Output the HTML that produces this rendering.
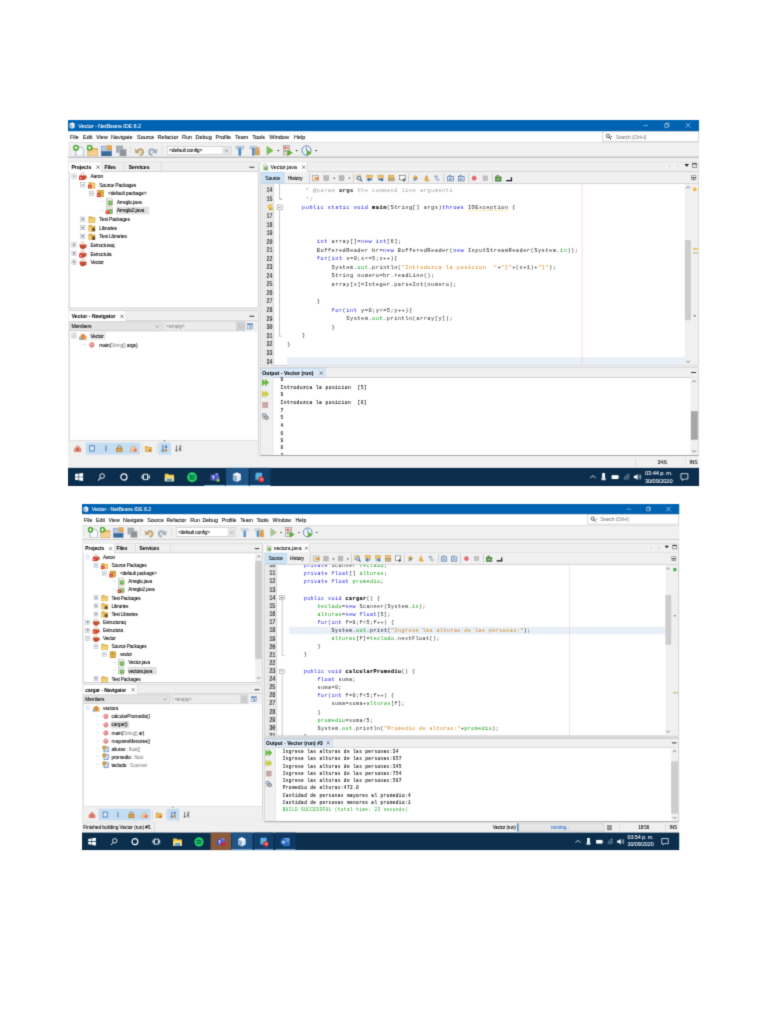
<!DOCTYPE html>
<html><head><meta charset="utf-8"><title>NetBeans screenshots</title>
<style>
html,body{margin:0;padding:0;background:#fff;}
body{width:768px;height:1024px;position:relative;overflow:hidden;font-family:"Liberation Sans",sans-serif;}
.wrap{position:absolute;overflow:hidden;background:#fff;filter:url(#soft);}
.shot{position:absolute;transform-origin:0 0;overflow:hidden;background:#f0f0f0;}
.shot div,.shot span,.shot svg{position:absolute;}
.shot span{white-space:pre;}
.s{font-family:"Liberation Sans",sans-serif;letter-spacing:-0.4px;-webkit-text-stroke:0.12px;}
.m{font-family:"Liberation Mono",monospace;}
.m i,.s i{font-style:normal;}
.m b{font-weight:bold;color:#000;-webkit-text-stroke:0.3px #000;}
</style></head>
<body>
<svg width="0" height="0" style="position:absolute"><defs><filter id="soft" x="0" y="0" width="1" height="1" color-interpolation-filters="sRGB"><feConvolveMatrix order="3" kernelMatrix="0.037 0.192 0.037 0.192 1 0.192 0.037 0.192 0.037" divisor="1.916" edgeMode="duplicate" preserveAlpha="true"/></filter></defs></svg>
<div class="wrap" style="left:66px;top:117px;width:636px;height:371px">
<div class="shot" style="left:2.30px;top:2.80px;width:1366px;height:768px;transform:scale(0.46208,0.47656)">
<div style="left:0.0px;top:0.0px;width:1366.0px;height:23.5px;background:#0063b1;"></div>
<svg style="left:1.3px;top:3.8px" width="16" height="16" viewBox="0 0 16 16"><path d="M8 1.5l5.5 2.5v7.5l-5.5 3l-5.5-3v-7.5z" fill="#dfe9f5"/><path d="M8 1.5l5.5 2.5l-5.5 2.7l-5.5-2.7z" fill="#f4f8fc"/><path d="M8 6.7v7.8l-5.5-3v-7.5z" fill="#9fb9d6"/></svg>
<span class="s" style="top:4.0px;font-size:12px;line-height:16px;color:#fff;left:22.3px;letter-spacing:-0.2px;">Vector - NetBeans IDE 8.2</span>
<svg style="left:1242.2px;top:3.3px" width="16" height="16" viewBox="0 0 16 16"><path d="M3 8.5h10" stroke="#fff" stroke-width="1" fill="none"/></svg>
<svg style="left:1287.7px;top:2.9px" width="16" height="16" viewBox="0 0 16 16"><path d="M3.5 5.5h7v7h-7zM5.5 5.5v-2h7v7h-2" stroke="#fff" stroke-width="1" fill="none"/></svg>
<svg style="left:1334.2px;top:3.3px" width="16" height="16" viewBox="0 0 16 16"><path d="M3 3l10 10M13 3l-10 10" stroke="#fff" stroke-width="1.1" fill="none"/></svg>
<div style="left:0.0px;top:23.5px;width:1366.0px;height:23.7px;background:#fff;"></div>
<span class="s" style="top:27.3px;font-size:12px;line-height:16px;color:#000;left:4.1px;letter-spacing:-0.05px;">File</span>
<span class="s" style="top:27.3px;font-size:12px;line-height:16px;color:#000;left:32.5px;letter-spacing:-0.05px;">Edit</span>
<span class="s" style="top:27.3px;font-size:12px;line-height:16px;color:#000;left:60.4px;letter-spacing:-0.05px;">View</span>
<span class="s" style="top:27.3px;font-size:12px;line-height:16px;color:#000;left:92.8px;letter-spacing:-0.05px;">Navigate</span>
<span class="s" style="top:27.3px;font-size:12px;line-height:16px;color:#000;left:149.3px;letter-spacing:-0.05px;">Source</span>
<span class="s" style="top:27.3px;font-size:12px;line-height:16px;color:#000;left:193.7px;letter-spacing:-0.05px;">Refactor</span>
<span class="s" style="top:27.3px;font-size:12px;line-height:16px;color:#000;left:246.7px;letter-spacing:-0.05px;">Run</span>
<span class="s" style="top:27.3px;font-size:12px;line-height:16px;color:#000;left:275.9px;letter-spacing:-0.05px;">Debug</span>
<span class="s" style="top:27.3px;font-size:12px;line-height:16px;color:#000;left:319.2px;letter-spacing:-0.05px;">Profile</span>
<span class="s" style="top:27.3px;font-size:12px;line-height:16px;color:#000;left:361.4px;letter-spacing:-0.05px;">Team</span>
<span class="s" style="top:27.3px;font-size:12px;line-height:16px;color:#000;left:398.8px;letter-spacing:-0.05px;">Tools</span>
<span class="s" style="top:27.3px;font-size:12px;line-height:16px;color:#000;left:435.6px;letter-spacing:-0.05px;">Window</span>
<span class="s" style="top:27.3px;font-size:12px;line-height:16px;color:#000;left:489.1px;letter-spacing:-0.05px;">Help</span>
<div style="left:1156.1px;top:23.9px;width:208.8px;height:21.4px;background:#fff;border:1px solid #abadb3;box-sizing:border-box;"></div>
<svg style="left:1162.1px;top:26.6px" width="16" height="16" viewBox="0 0 16 16"><circle cx="6.5" cy="6.5" r="3.6" fill="none" stroke="#333" stroke-width="1.7"/><path d="M9.2 9.2l4 4" stroke="#333" stroke-width="2.2"/><path d="M12.5 6.5h4l-2 2.4z" fill="#222"/></svg>
<span class="s" style="top:27.8px;font-size:11px;line-height:14px;color:#8a8a8a;left:1185.3px;">Search (Ctrl+I)</span>
<div style="left:0.0px;top:47.2px;width:1366.0px;height:30.8px;background:#f0f0f0;"></div>
<div style="left:0.0px;top:46.6px;width:1366.0px;height:1.3px;background:#cbc8c6"></div>
<div style="left:0.0px;top:77.3px;width:1366.0px;height:1.6px;background:#a9a9a9"></div>
<svg style="left:1.3px;top:51.6px" width="6" height="24" viewBox="0 0 6 24"><path d="M3 4v16" stroke="#c4c4c4" stroke-width="2" stroke-dasharray="1.5 2"/></svg>
<svg style="left:11.2px;top:51.6px" width="24" height="24" viewBox="1.600 1.600 20.800 20.800"><path d="M6.500 5.500h10l5 5v12h-15z" fill="#f6f9fd" stroke="#8da0b8" stroke-width="1.400"/><circle cx="7" cy="7" r="5.200" fill="#4fb233" stroke="#2f8a1c" stroke-width="0.800"/><path d="M7 4v6M4 7h6" stroke="#fff" stroke-width="1.800"/></svg>
<svg style="left:40.8px;top:51.6px" width="24" height="24" viewBox="1.600 1.600 20.800 20.800"><path d="M3.500 6.500h9l2 2.500h7.500v13h-18.500z" fill="#f0b866" stroke="#c98f3a" stroke-width="1.300"/><path d="M4 11.500h17.500v10h-17.500z" fill="#f6cf93"/><circle cx="6.500" cy="7" r="5.200" fill="#4fb233" stroke="#2f8a1c" stroke-width="0.800"/><path d="M6.500 4v6M3.500 7h6" stroke="#fff" stroke-width="1.800"/></svg>
<svg style="left:71.3px;top:51.6px" width="24" height="24" viewBox="1.600 1.600 20.800 20.800"><path d="M2.500 4.500h9l2 2h8.500v15.500h-19.500z" fill="#b4cbe4" stroke="#6e8fb5" stroke-width="1.200"/><path d="M2.500 13.500h19.500v8.500h-19.500z" fill="#3b6a9e"/><rect x="13.500" y="3" width="8.500" height="8" fill="#f0a94f" stroke="#c98a33" stroke-width="0.900"/></svg>
<svg style="left:102.7px;top:51.6px" width="24" height="24" viewBox="1.600 1.600 20.800 20.800"><rect x="2.500" y="3" width="13" height="13" fill="#a4aab1"/><rect x="9" y="9.500" width="13" height="13" fill="#8d949c" stroke="#c3c7cc" stroke-width="1.200"/></svg>
<svg style="left:131.8px;top:51.6px" width="6" height="24" viewBox="0 0 6 24"><path d="M3 4v16" stroke="#c4c4c4" stroke-width="2" stroke-dasharray="1.5 2"/></svg>
<svg style="left:141.7px;top:51.6px" width="24" height="24" viewBox="1.600 1.600 20.800 20.800"><path d="M9 14c1-5 9-6 10 0c0.500 3.500-2 6-6 6" stroke="#c4a678" stroke-width="4.200" fill="none"/><path d="M3.500 8.500l1.500 9.500l9-2.500z" fill="#c4a678"/></svg>
<svg style="left:172.4px;top:51.6px" width="24" height="24" viewBox="1.600 1.600 20.800 20.800"><g transform="translate(24,0) scale(-1,1)"><path d="M9 14c1-5 9-6 10 0c0.500 3.500-2 6-6 6" stroke="#9fb0bd" stroke-width="4.200" fill="none"/><path d="M3.500 8.500l1.500 9.500l9-2.500z" fill="#9fb0bd"/></g></svg>
<svg style="left:201.3px;top:51.6px" width="6" height="24" viewBox="0 0 6 24"><path d="M3 4v16" stroke="#c4c4c4" stroke-width="2" stroke-dasharray="1.5 2"/></svg>
<div style="left:213.6px;top:54.6px;width:140.0px;height:18.7px;background:#fff;border:1px solid #abadb3;box-sizing:border-box;"></div>
<div style="left:333.9px;top:55.6px;width:18.6px;height:16.6px;background:#e4e4e4;"></div>
<svg style="left:335.4px;top:56.2px" width="16" height="16" viewBox="0 0 16 16"><path d="M4.5 6.5l3.5 3.5l3.5-3.5" stroke="#555" stroke-width="1.2" fill="none"/></svg>
<span class="s" style="top:57.0px;font-size:11px;line-height:14px;color:#000;left:218.6px;">&lt;default config&gt;</span>
<svg style="left:359.6px;top:51.6px" width="24" height="24" viewBox="1.600 1.600 20.800 20.800"><path d="M5 4.500h14v4.500h-3.500v-1.500h-7v1.500h-3.500z" fill="#cbd8e8" stroke="#7f9bbd" stroke-width="1"/><rect x="10" y="8.500" width="4" height="12.500" fill="#4a8bd0" stroke="#356fb0" stroke-width="0.700"/></svg>
<svg style="left:392.0px;top:51.6px" width="24" height="24" viewBox="1.600 1.600 20.800 20.800"><path d="M3.500 4.500h12v4.500h-3v-1.500h-6v1.500h-3z" fill="#cbd8e8" stroke="#7f9bbd" stroke-width="1"/><rect x="7.500" y="8.500" width="4" height="12" fill="#4a8bd0" stroke="#356fb0" stroke-width="0.700"/><path d="M13.500 9l6.500-3l1.500 14h-8z" fill="#e6a961" stroke="#b87c33" stroke-width="0.800"/><path d="M15 13v6M17.500 12v7" stroke="#c98a3a" stroke-width="0.800"/></svg>
<svg style="left:423.9px;top:51.6px" width="24" height="24" viewBox="1.600 1.600 20.800 20.800"><path d="M7.500 4.500l11 7.500l-11 7.500z" fill="#7cc35a" stroke="#5aa83a" stroke-width="1.100"/></svg>
<svg style="left:451.1px;top:59.6px" width="8" height="8" viewBox="0 0 8 8"><path d="M1.500 3h5l-2.500 3z" fill="#333"/></svg>
<svg style="left:462.8px;top:51.6px" width="24" height="24" viewBox="1.600 1.600 20.800 20.800"><rect x="4" y="3" width="12" height="17" fill="#e9e4de" stroke="#8c8580" stroke-width="1"/><rect x="6" y="5" width="4" height="4" fill="#d9534f"/><rect x="6" y="11" width="4" height="4" fill="#9aa0a6"/><rect x="11" y="5" width="4" height="4" fill="#e8a0a0"/><path d="M12 11l9 5l-9 5z" fill="#5cb531" stroke="#3f8c1f" stroke-width="0.8"/></svg>
<svg style="left:491.4px;top:59.6px" width="8" height="8" viewBox="0 0 8 8"><path d="M1.500 3h5l-2.500 3z" fill="#333"/></svg>
<svg style="left:504.1px;top:51.6px" width="24" height="24" viewBox="1.600 1.600 20.800 20.800"><circle cx="12" cy="12" r="8.500" fill="#eef4fb" stroke="#5c7fa8" stroke-width="1.800"/><path d="M12 12v-6M12 12l4 2" stroke="#44688f" stroke-width="1.300"/><path d="M13 12l8 4.500l-8 4.500z" fill="#5cb531" stroke="#3f8c1f" stroke-width="0.700"/></svg>
<svg style="left:532.7px;top:59.6px" width="8" height="8" viewBox="0 0 8 8"><path d="M1.500 3h5l-2.500 3z" fill="#333"/></svg>
<div style="left:1.5px;top:87.9px;width:410.3px;height:307.4px;background:#fff;border:1px solid #a5a5a5;box-sizing:border-box;"></div>
<div style="left:2.4px;top:88.6px;width:408.6px;height:19.7px;background:#efefef;border-bottom:1px solid #b4b4b4;"></div>
<div style="left:2.4px;top:88.6px;width:70.1px;height:20.8px;background:#fff;border-right:1px solid #c8c8c8;"></div>
<span class="s" style="top:91.6px;font-size:11px;line-height:14px;color:#000;left:7.4px;font-weight:bold;letter-spacing:-0.05px;">Projects</span>
<svg style="left:59.7px;top:93.8px" width="10" height="10" viewBox="0 0 10 10"><path d="M1.500 1.500l7 7M8.500 1.500l-7 7" stroke="#333" stroke-width="1.300"/></svg>
<span class="s" style="top:91.6px;font-size:11px;line-height:14px;color:#000;left:78.8px;font-weight:bold;letter-spacing:-0.05px;">Files</span>
<div style="left:121.3px;top:89.0px;width:1.0px;height:18.9px;background:#c8c8c8"></div>
<span class="s" style="top:91.6px;font-size:11px;line-height:14px;color:#000;left:131.4px;font-weight:bold;letter-spacing:-0.05px;">Services</span>
<div style="left:200.8px;top:89.0px;width:1.0px;height:18.9px;background:#c8c8c8"></div>
<svg style="left:392.2px;top:93.0px" width="12" height="12" viewBox="0 0 12 12"><path d="M0.500 6h11" stroke="#333" stroke-width="2.200"/></svg>
<svg style="left:6.2px;top:110.9px" width="14" height="14" viewBox="0 0 14 14"><rect x="2.500" y="2.500" width="9" height="9" fill="#fff" stroke="#9ba5b7" stroke-width="1.100"/><path d="M4.500 7h5" stroke="#333" stroke-width="1.200"/></svg>
<svg style="left:24.0px;top:109.4px" width="17" height="17" viewBox="1.300 1.300 13.400 13.400"><path d="M2.500 7h10.500c0 5-2 7.500-5.250 7.500s-5.250-2.500-5.250-7.500z" fill="#cc4a32" stroke="#8f2f1c" stroke-width="0.800"/><path d="M13 8.500c2.500 0 2.500 3.500-0.700 3.500" stroke="#a33a22" stroke-width="1.100" fill="none"/><path d="M5.500 5.500c-1-1.500 1-2 0-3.500M9 5.500c-1-1.500 1-2 0-3.500" stroke="#c98a5a" stroke-width="1.100" fill="none"/><path d="M3 7h10" stroke="#f0b08a" stroke-width="1.200"/><circle cx="4.500" cy="11.500" r="3.800" fill="#d8322b"/><path d="M3 10l3 3M6 10l-3 3" stroke="#fff" stroke-width="0.900"/></svg>
<span class="s" style="top:111.1px;font-size:11px;line-height:14px;color:#000;left:48.5px;">Aaron</span>
<svg style="left:25.1px;top:128.6px" width="14" height="14" viewBox="0 0 14 14"><rect x="2.500" y="2.500" width="9" height="9" fill="#fff" stroke="#9ba5b7" stroke-width="1.100"/><path d="M4.500 7h5" stroke="#333" stroke-width="1.200"/></svg>
<svg style="left:42.9px;top:127.1px" width="17" height="17" viewBox="1.300 1.300 13.400 13.400"><path d="M3 4.500h4.500l1.500 1.500h4.500v8.500h-10.500z" fill="#e9bb4e" stroke="#b98a26" stroke-width="0.900"/><path d="M3.500 7.500h9.500v6.500h-9.500z" fill="#f2d272"/><circle cx="4.500" cy="11.500" r="3.800" fill="#d8322b"/><path d="M3 10l3 3M6 10l-3 3" stroke="#fff" stroke-width="0.900"/></svg>
<span class="s" style="top:128.8px;font-size:11px;line-height:14px;color:#000;left:67.4px;">Source Packages</span>
<svg style="left:44.1px;top:146.6px" width="14" height="14" viewBox="0 0 14 14"><rect x="2.500" y="2.500" width="9" height="9" fill="#fff" stroke="#9ba5b7" stroke-width="1.100"/><path d="M4.500 7h5" stroke="#333" stroke-width="1.200"/></svg>
<svg style="left:61.8px;top:145.1px" width="17" height="17" viewBox="1.300 1.300 13.400 13.400"><rect x="3" y="3.500" width="10" height="10.500" fill="#e8b84a" stroke="#b3791f" stroke-width="0.900"/><path d="M3 7h10M8 3.500v10.500" stroke="#b3791f" stroke-width="0.900"/><circle cx="4.500" cy="11.500" r="3.800" fill="#d8322b"/><path d="M3 10l3 3M6 10l-3 3" stroke="#fff" stroke-width="0.900"/></svg>
<span class="s" style="top:146.8px;font-size:11px;line-height:14px;color:#000;left:86.3px;">&lt;default package&gt;</span>
<div style="left:70.0px;top:171.4px;width:7.6px;height:1.0px;background:#c3c8d2"></div>
<svg style="left:80.8px;top:163.4px" width="17" height="17" viewBox="1.300 1.300 13.400 13.400"><path d="M3.500 1.500h7l3 3v10h-10z" fill="#f3f3ee" stroke="#9a9a92" stroke-width="1"/><circle cx="9.500" cy="10" r="4" fill="#5aa83a"/><path d="M8 10a1.500 1.500 0 1 1 1.500 1.500" stroke="#e8f5e0" stroke-width="1.200" fill="none"/><path d="M4.500 6h5M4.500 8h3" stroke="#b5b5ad" stroke-width="0.800"/></svg>
<span class="s" style="top:165.1px;font-size:11px;line-height:14px;color:#000;left:105.3px;">Arreglo.java</span>
<div style="left:70.0px;top:189.4px;width:7.6px;height:1.0px;background:#c3c8d2"></div>
<svg style="left:80.8px;top:181.4px" width="17" height="17" viewBox="1.300 1.300 13.400 13.400"><path d="M3.500 1.500h7l3 3v10h-10z" fill="#f3f3ee" stroke="#9a9a92" stroke-width="1"/><circle cx="9.500" cy="10" r="4" fill="#5aa83a"/><path d="M8 10a1.500 1.500 0 1 1 1.500 1.500" stroke="#e8f5e0" stroke-width="1.200" fill="none"/><path d="M4.500 6h5M4.500 8h3" stroke="#b5b5ad" stroke-width="0.800"/><circle cx="4.500" cy="11.500" r="3.800" fill="#d8322b"/><path d="M3 10l3 3M6 10l-3 3" stroke="#fff" stroke-width="0.900"/></svg>
<div style="left:104.0px;top:181.7px;width:71.6px;height:16.6px;background:#e1e1e1;"></div>
<span class="s" style="top:183.1px;font-size:11px;line-height:14px;color:#000;left:105.3px;">Arreglo2.java</span>
<svg style="left:25.1px;top:200.7px" width="14" height="14" viewBox="0 0 14 14"><rect x="2.500" y="2.500" width="9" height="9" fill="#fff" stroke="#9ba5b7" stroke-width="1.100"/><path d="M4.500 7h5M7 4.500v5" stroke="#333" stroke-width="1.200"/></svg>
<svg style="left:42.9px;top:199.2px" width="17" height="17" viewBox="1.300 1.300 13.400 13.400"><path d="M3 4.500h4.500l1.500 1.500h4.500v8.500h-10.500z" fill="#e9bb4e" stroke="#b98a26" stroke-width="0.900"/><path d="M3.500 7.500h9.500v6.500h-9.500z" fill="#f2d272"/></svg>
<span class="s" style="top:200.9px;font-size:11px;line-height:14px;color:#000;left:67.4px;">Test Packages</span>
<svg style="left:25.1px;top:218.8px" width="14" height="14" viewBox="0 0 14 14"><rect x="2.500" y="2.500" width="9" height="9" fill="#fff" stroke="#9ba5b7" stroke-width="1.100"/><path d="M4.500 7h5M7 4.500v5" stroke="#333" stroke-width="1.200"/></svg>
<svg style="left:42.9px;top:217.3px" width="17" height="17" viewBox="1.300 1.300 13.400 13.400"><path d="M3 4.500h4.500l1.500 1.500h4.500v8.500h-10.500z" fill="#e9bb4e" stroke="#b98a26" stroke-width="0.900"/><path d="M3.500 7.500h9.500v6.500h-9.500z" fill="#f2d272"/><path d="M8 8.500h5.500v6h-5.500z" fill="#6b4a2a"/><path d="M9 8.500v6" stroke="#c9a46a" stroke-width="0.800"/></svg>
<span class="s" style="top:219.0px;font-size:11px;line-height:14px;color:#000;left:67.4px;">Libraries</span>
<svg style="left:25.1px;top:236.8px" width="14" height="14" viewBox="0 0 14 14"><rect x="2.500" y="2.500" width="9" height="9" fill="#fff" stroke="#9ba5b7" stroke-width="1.100"/><path d="M4.500 7h5M7 4.500v5" stroke="#333" stroke-width="1.200"/></svg>
<svg style="left:42.9px;top:235.3px" width="17" height="17" viewBox="1.300 1.300 13.400 13.400"><path d="M3 4.500h4.500l1.500 1.500h4.500v8.500h-10.500z" fill="#e9bb4e" stroke="#b98a26" stroke-width="0.900"/><path d="M3.500 7.500h9.500v6.500h-9.500z" fill="#f2d272"/><path d="M8 8.500h5.500v6h-5.500z" fill="#6b4a2a"/><path d="M9 8.500v6" stroke="#c9a46a" stroke-width="0.800"/></svg>
<span class="s" style="top:237.0px;font-size:11px;line-height:14px;color:#000;left:67.4px;">Test Libraries</span>
<svg style="left:6.2px;top:255.1px" width="14" height="14" viewBox="0 0 14 14"><rect x="2.500" y="2.500" width="9" height="9" fill="#fff" stroke="#9ba5b7" stroke-width="1.100"/><path d="M4.500 7h5M7 4.500v5" stroke="#333" stroke-width="1.200"/></svg>
<svg style="left:24.0px;top:253.6px" width="17" height="17" viewBox="1.300 1.300 13.400 13.400"><path d="M2.500 7h10.500c0 5-2 7.500-5.250 7.500s-5.250-2.500-5.250-7.500z" fill="#cc4a32" stroke="#8f2f1c" stroke-width="0.800"/><path d="M13 8.500c2.500 0 2.500 3.500-0.700 3.500" stroke="#a33a22" stroke-width="1.100" fill="none"/><path d="M5.500 5.500c-1-1.500 1-2 0-3.500M9 5.500c-1-1.500 1-2 0-3.500" stroke="#c98a5a" stroke-width="1.100" fill="none"/><path d="M3 7h10" stroke="#f0b08a" stroke-width="1.200"/></svg>
<span class="s" style="top:255.3px;font-size:11px;line-height:14px;color:#000;left:48.5px;">Estructuraq</span>
<svg style="left:6.2px;top:273.3px" width="14" height="14" viewBox="0 0 14 14"><rect x="2.500" y="2.500" width="9" height="9" fill="#fff" stroke="#9ba5b7" stroke-width="1.100"/><path d="M4.500 7h5M7 4.500v5" stroke="#333" stroke-width="1.200"/></svg>
<svg style="left:24.0px;top:271.8px" width="17" height="17" viewBox="1.300 1.300 13.400 13.400"><path d="M2.500 7h10.500c0 5-2 7.500-5.250 7.500s-5.250-2.500-5.250-7.500z" fill="#cc4a32" stroke="#8f2f1c" stroke-width="0.800"/><path d="M13 8.500c2.500 0 2.500 3.500-0.700 3.500" stroke="#a33a22" stroke-width="1.100" fill="none"/><path d="M5.500 5.500c-1-1.500 1-2 0-3.500M9 5.500c-1-1.500 1-2 0-3.500" stroke="#c98a5a" stroke-width="1.100" fill="none"/><path d="M3 7h10" stroke="#f0b08a" stroke-width="1.200"/><circle cx="4.500" cy="11.500" r="3.800" fill="#d8322b"/><path d="M3 10l3 3M6 10l-3 3" stroke="#fff" stroke-width="0.900"/></svg>
<span class="s" style="top:273.6px;font-size:11px;line-height:14px;color:#000;left:48.5px;">Estructuta</span>
<svg style="left:6.2px;top:291.4px" width="14" height="14" viewBox="0 0 14 14"><rect x="2.500" y="2.500" width="9" height="9" fill="#fff" stroke="#9ba5b7" stroke-width="1.100"/><path d="M4.500 7h5M7 4.500v5" stroke="#333" stroke-width="1.200"/></svg>
<svg style="left:24.0px;top:289.9px" width="17" height="17" viewBox="1.300 1.300 13.400 13.400"><path d="M2.500 7h10.500c0 5-2 7.500-5.250 7.500s-5.250-2.500-5.250-7.500z" fill="#cc4a32" stroke="#8f2f1c" stroke-width="0.800"/><path d="M13 8.500c2.500 0 2.500 3.500-0.700 3.500" stroke="#a33a22" stroke-width="1.100" fill="none"/><path d="M5.500 5.500c-1-1.500 1-2 0-3.500M9 5.500c-1-1.500 1-2 0-3.500" stroke="#c98a5a" stroke-width="1.100" fill="none"/><path d="M3 7h10" stroke="#f0b08a" stroke-width="1.200"/></svg>
<span class="s" style="top:291.6px;font-size:11px;line-height:14px;color:#000;left:48.5px;">Vector</span>
<div style="left:1.5px;top:400.4px;width:410.3px;height:304.3px;background:#fff;border:1px solid #a5a5a5;box-sizing:border-box;"></div>
<div style="left:2.4px;top:401.2px;width:408.6px;height:19.7px;background:#efefef;border-bottom:1px solid #b4b4b4;"></div>
<div style="left:2.4px;top:401.2px;width:122.5px;height:20.8px;background:#fff;border-right:1px solid #c8c8c8;"></div>
<span class="s" style="top:404.3px;font-size:11px;line-height:14px;color:#000;left:8.0px;font-weight:bold;letter-spacing:0.05px;">Vector - Navigator</span>
<svg style="left:112.1px;top:406.5px" width="10" height="10" viewBox="0 0 10 10"><path d="M1.500 1.500l7 7M8.500 1.500l-7 7" stroke="#333" stroke-width="1.300"/></svg>
<svg style="left:392.2px;top:405.7px" width="12" height="12" viewBox="0 0 12 12"><path d="M0.500 6h11" stroke="#333" stroke-width="2.200"/></svg>
<div style="left:2.4px;top:422.2px;width:408.6px;height:21.8px;background:#f0f0f0;"></div>
<div style="left:3.2px;top:423.2px;width:202.1px;height:19.5px;background:#e3e3e3;border:1px solid #c0c0c0;box-sizing:border-box;"></div>
<span class="s" style="top:425.9px;font-size:11px;line-height:14px;color:#000;left:7.4px;">Members</span>
<svg style="left:185.3px;top:425.1px" width="16" height="16" viewBox="0 0 16 16"><path d="M4.5 6.5l3.5 3.5l3.5-3.5" stroke="#666" stroke-width="1.2" fill="none"/></svg>
<div style="left:208.0px;top:423.2px;width:175.7px;height:19.5px;background:#ececec;border:1px solid #c6c6c6;box-sizing:border-box;"></div>
<span class="s" style="top:425.9px;font-size:11px;line-height:14px;color:#8c8c8c;left:212.3px;">&lt;empty&gt;</span>
<div style="left:364.0px;top:424.3px;width:18.8px;height:17.4px;background:#cfcfcf;"></div>
<svg style="left:365.3px;top:425.1px" width="16" height="16" viewBox="0 0 16 16"><path d="M4.5 6.5l3.5 3.5l3.5-3.5" stroke="#aaa" stroke-width="1.2" fill="none"/></svg>
<svg style="left:385.7px;top:425.3px" width="16" height="16" viewBox="0 0 16 16"><rect x="2.500" y="2.500" width="11" height="11" fill="#eaf2fb" stroke="#5b86b8" stroke-width="1"/><rect x="2.500" y="2.500" width="11" height="3" fill="#5b86b8"/><path d="M7 5.500v8" stroke="#5b86b8"/><rect x="8.500" y="8" width="3" height="4" fill="none" stroke="#5b86b8" stroke-width="0.800"/></svg>
<svg style="left:6.2px;top:446.2px" width="14" height="14" viewBox="0 0 14 14"><rect x="2.500" y="2.500" width="9" height="9" fill="#fff" stroke="#9ba5b7" stroke-width="1.100"/><path d="M4.500 7h5" stroke="#333" stroke-width="1.200"/></svg>
<svg style="left:24.0px;top:444.7px" width="17" height="17" viewBox="1.300 1.300 13.400 13.400"><path d="M2 9l6-5l6 5v5h-12z" fill="#f2d9a0" stroke="#c9913a" stroke-width="0.900"/><circle cx="8" cy="9.500" r="3.600" fill="#e98b3a" stroke="#b55f1c" stroke-width="0.700"/><rect x="1.500" y="10.500" width="5" height="4" fill="#7fb0dd"/></svg>
<div style="left:47.2px;top:445.1px;width:34.8px;height:16.6px;background:#ececec;"></div>
<span class="s" style="top:446.5px;font-size:11px;line-height:14px;color:#000;left:48.5px;">Vector</span>
<div style="left:32.1px;top:471.0px;width:7.6px;height:1.0px;background:#c3c8d2"></div>
<svg style="left:42.9px;top:463.0px" width="17" height="17" viewBox="1.300 1.300 13.400 13.400"><circle cx="8" cy="8.500" r="4" fill="#ea8f8f" stroke="#cf6f6f" stroke-width="0.900"/><ellipse cx="7" cy="7.200" rx="1.700" ry="1.200" fill="#f7c4c4"/></svg>
<span class="s" style="top:464.7px;font-size:11px;line-height:14px;color:#000;left:67.4px;">main(<i style="color:#8c8c8c">String[]</i> args)</span>
<div style="left:2.4px;top:672.3px;width:408.6px;height:31.5px;background:#f0f0f0;border-top:1px solid #c9c9c9;"></div>
<div style="left:38.3px;top:676.5px;width:117.5px;height:25.2px;background:#c4ddf3;"></div>
<div style="left:196.3px;top:676.5px;width:26.6px;height:25.2px;background:#c4ddf3;"></div>
<svg style="left:13.4px;top:681.1px" width="16" height="16" viewBox="1.500 1.500 13 13"><path d="M2 9l6-5.500l6 5.500v5h-12z" fill="#e9a08a" stroke="#b35a4a" stroke-width="1"/><circle cx="8" cy="10" r="2.800" fill="#d9534f"/></svg>
<svg style="left:43.9px;top:681.1px" width="16" height="16" viewBox="1.500 1.500 13 13"><rect x="4" y="3.500" width="8" height="9" fill="#dbe9f7" stroke="#4b79ae" stroke-width="1.500"/></svg>
<svg style="left:73.6px;top:681.1px" width="16" height="16" viewBox="1.500 1.500 13 13"><path d="M8 3v10" stroke="#5b86b8" stroke-width="2"/></svg>
<svg style="left:103.2px;top:681.1px" width="16" height="16" viewBox="1.500 1.500 13 13"><path d="M3 7.500h10v6.500h-10z" fill="#d9a24a" stroke="#9a6a1c" stroke-width="0.900"/><path d="M5.500 7.500v-2a2.500 2.500 0 0 1 5 0v2" stroke="#9a6a1c" stroke-width="1.300" fill="none"/></svg>
<svg style="left:134.2px;top:681.1px" width="16" height="16" viewBox="1.500 1.500 13 13"><path d="M2.500 9l5.500-5l5.500 5v5h-11z" fill="#f0cf9a" stroke="#c9913a" stroke-width="1"/><circle cx="10.500" cy="11" r="2.800" fill="#e57373"/></svg>
<div style="left:159.6px;top:679.7px;width:1.0px;height:18.9px;background:#c3c3c3"></div>
<svg style="left:166.2px;top:681.1px" width="16" height="16" viewBox="1.500 1.500 13 13"><path d="M2.500 5h5l1.500 1.500h4.500v7.500h-11z" fill="#edc15c" stroke="#b98a26" stroke-width="0.900"/><path d="M9 9l4 2.500l-4 2.500z" fill="#c0504d"/></svg>
<div style="left:192.1px;top:679.7px;width:1.0px;height:18.9px;background:#c3c3c3"></div>
<svg style="left:201.3px;top:681.1px" width="16" height="16" viewBox="1.500 1.500 13 13"><path d="M5 2.500v11M3 11l2 2.500l2-2.500" stroke="#33577f" stroke-width="1.300" fill="none"/><rect x="8.500" y="3" width="4" height="4.500" fill="#5b86b8"/><rect x="8.500" y="9" width="4" height="4.500" fill="#c98a3a"/></svg>
<svg style="left:230.5px;top:681.1px" width="16" height="16" viewBox="1.500 1.500 13 13"><path d="M4.500 3v10M2.500 10.500l2 2.500l2-2.500" stroke="#444" stroke-width="1.300" fill="none"/><path d="M9 4h4l-4 4h4M9 13l2-4.500l2 4.500" stroke="#444" stroke-width="1.200" fill="none"/></svg>
<svg style="left:204.6px;top:669.6px" width="8" height="8" viewBox="0 0 8 8"><path d="M1.500 2.500h5l-2.500 3z" fill="#777"/></svg>
<div style="left:415.7px;top:87.9px;width:949.0px;height:427.9px;background:#fff;border:1px solid #a5a5a5;box-sizing:border-box;"></div>
<div style="left:416.6px;top:88.6px;width:947.2px;height:19.5px;background:#f0f0f0;border-bottom:1px solid #b4b4b4;"></div>
<div style="left:416.6px;top:88.6px;width:100.0px;height:20.6px;background:#fff;border-right:1px solid #b4b4b4;"></div>
<svg style="left:419.0px;top:90.6px" width="16" height="16" viewBox="0 0 16 16"><path d="M3.500 1.500h7l3 3v10h-10z" fill="#f3f3ee" stroke="#9a9a92" stroke-width="1"/><circle cx="9.500" cy="10" r="4" fill="#5aa83a"/><path d="M8 10a1.500 1.500 0 1 1 1.500 1.500" stroke="#e8f5e0" stroke-width="1.200" fill="none"/><path d="M4.500 6h5M4.500 8h3" stroke="#b5b5ad" stroke-width="0.800"/></svg>
<span class="s" style="top:91.1px;font-size:11.5px;line-height:15px;color:#000;left:438.2px;letter-spacing:0.1px;">Vector.java</span>
<svg style="left:504.7px;top:93.8px" width="10" height="10" viewBox="0 0 10 10"><path d="M1.500 1.500l7 7M8.500 1.500l-7 7" stroke="#333" stroke-width="1.300"/></svg>
<span class="s" style="top:86.3px;font-size:13px;line-height:17px;color:#c2c2c2;left:1302.2px;transform:translateX(-50%);">‹</span>
<span class="s" style="top:86.3px;font-size:13px;line-height:17px;color:#c2c2c2;left:1319.5px;transform:translateX(-50%);">›</span>
<svg style="left:1330.5px;top:86.8px" width="16" height="16" viewBox="0 0 16 16"><path d="M3 5.5h10l-5 5.5z" fill="#222"/></svg>
<svg style="left:1347.8px;top:86.8px" width="16" height="16" viewBox="0 0 16 16"><path d="M3.5 4.5h9v8h-9z" stroke="#222" stroke-width="1" fill="none"/><path d="M3.5 5h9" stroke="#222" stroke-width="2"/></svg>
<div style="left:416.6px;top:109.1px;width:947.2px;height:24.3px;background:#f0f0f0;border-bottom:1px solid #b8b8b8;"></div>
<div style="left:418.8px;top:110.0px;width:48.9px;height:22.2px;background:#cde4f7;border:1px solid #9ccbee;box-sizing:border-box;"></div>
<span class="s" style="top:114.3px;font-size:11px;line-height:14px;color:#000;left:443.0px;transform:translateX(-50%);">Source</span>
<span class="s" style="top:114.3px;font-size:11px;line-height:14px;color:#000;left:491.3px;transform:translateX(-50%);">History</span>
<div style="left:521.9px;top:112.1px;width:1.0px;height:18.9px;background:#a9a9a9"></div>
<svg style="left:528.1px;top:113.5px" width="16" height="16" viewBox="0.400 0.400 15.200 15.200"><rect x="2" y="2.500" width="12" height="11" fill="#efe6d6" stroke="#8f8a80" stroke-width="1"/><path d="M6 6h6v5h-6z" fill="#e9a24a"/><path d="M9 8.500l5-3v6z" fill="#d9763a"/></svg>
<svg style="left:551.4px;top:113.5px" width="16" height="16" viewBox="0.400 0.400 15.200 15.200"><rect x="3" y="3" width="10" height="10" fill="#b9b9b9" stroke="#a8a8a8" stroke-width="1"/></svg>
<svg style="left:571.7px;top:118.1px" width="8" height="8" viewBox="0 0 8 8"><path d="M1.500 3h5l-2.500 3z" fill="#333"/></svg>
<svg style="left:583.9px;top:113.5px" width="16" height="16" viewBox="0.400 0.400 15.200 15.200"><rect x="3" y="3" width="10" height="10" fill="#b9b9b9" stroke="#a8a8a8" stroke-width="1"/></svg>
<svg style="left:605.0px;top:118.1px" width="8" height="8" viewBox="0 0 8 8"><path d="M1.500 3h5l-2.500 3z" fill="#333"/></svg>
<div style="left:617.6px;top:112.1px;width:1.0px;height:18.9px;background:#a9a9a9"></div>
<svg style="left:622.4px;top:113.5px" width="16" height="16" viewBox="0.400 0.400 15.200 15.200"><rect x="1.500" y="1.500" width="10" height="8" fill="#f5e7b8" stroke="#b79a4a" stroke-width="0.900"/><circle cx="8" cy="8" r="3.600" fill="#dfeaf7" stroke="#2f4f7a" stroke-width="1.600"/><path d="M10.500 10.500l4 4" stroke="#2f4f7a" stroke-width="2.200"/></svg>
<svg style="left:645.4px;top:113.5px" width="16" height="16" viewBox="0.400 0.400 15.200 15.200"><rect x="2" y="2" width="11" height="6.500" fill="#f1c46c" stroke="#b98a2e" stroke-width="0.900"/><path d="M13 11h-9l3-3M4 11l3 3" stroke="#2f6fb5" stroke-width="2.300" fill="none"/></svg>
<svg style="left:668.7px;top:113.5px" width="16" height="16" viewBox="0.400 0.400 15.200 15.200"><rect x="2" y="2" width="11" height="6.500" fill="#f1c46c" stroke="#b98a2e" stroke-width="0.900"/><path d="M3 11h9l-3-3M12 11l-3 3" stroke="#2f6fb5" stroke-width="2.300" fill="none"/></svg>
<svg style="left:691.9px;top:113.5px" width="16" height="16" viewBox="0.400 0.400 15.200 15.200"><rect x="2" y="2" width="11" height="5.500" fill="#f1c46c" stroke="#b98a2e" stroke-width="0.900"/><rect x="2" y="8.500" width="12" height="5" fill="#c9b48a" stroke="#8f7a4a" stroke-width="0.900"/></svg>
<svg style="left:715.7px;top:113.5px" width="16" height="16" viewBox="0.400 0.400 15.200 15.200"><rect x="1.500" y="2.500" width="12" height="9" fill="#fff" stroke="#555" stroke-width="1.100"/><path d="M11 8v6M8 11l3 3l3-3" stroke="#222" stroke-width="1.400" fill="none"/></svg>
<div style="left:736.8px;top:112.1px;width:1.0px;height:18.9px;background:#a9a9a9"></div>
<svg style="left:744.0px;top:113.5px" width="16" height="16" viewBox="0.400 0.400 15.200 15.200"><path d="M3 7l5-4.500l5 4.500l-5 4.500z" fill="#f0b64a" stroke="#b57f1c" stroke-width="0.900"/><path d="M6 10l-2.500 4M8 8a2 2 0 1 0 0.100 0" stroke="#2f6fb5" stroke-width="1.500" fill="none"/></svg>
<svg style="left:767.8px;top:113.5px" width="16" height="16" viewBox="0.400 0.400 15.200 15.200"><path d="M8 2v6M5 5.500l3 3l3-3" stroke="#e08a2a" stroke-width="2" fill="none"/><path d="M3 11l5-2.500l6 3.500l-5 2.500z" fill="#f0b64a" stroke="#b57f1c" stroke-width="0.800"/></svg>
<svg style="left:789.9px;top:113.5px" width="16" height="16" viewBox="0.400 0.400 15.200 15.200"><path d="M2.500 4.500l4-2l4 2.500l-4 2z" fill="#a8c2dd" stroke="#5f84ad" stroke-width="0.800"/><path d="M6 10.500l4-2l4 2.500l-4 2.500z" fill="#bfcfdf" stroke="#6f8fb0" stroke-width="0.800"/><path d="M6 6.500v3" stroke="#6f8fb0"/></svg>
<div style="left:813.4px;top:112.1px;width:1.0px;height:18.9px;background:#a9a9a9"></div>
<svg style="left:819.8px;top:113.5px" width="16" height="16" viewBox="0.400 0.400 15.200 15.200"><rect x="2" y="4.500" width="12" height="9" fill="#dbe7f3" stroke="#3f6a9a" stroke-width="1.300"/><path d="M5 9h6M5 11h4" stroke="#3f6a9a" stroke-width="1.200"/><path d="M4 2.500h5" stroke="#3f6a9a" stroke-width="1.400"/></svg>
<svg style="left:843.2px;top:113.5px" width="16" height="16" viewBox="0.400 0.400 15.200 15.200"><rect x="2" y="4.500" width="12" height="9" fill="#dbe7f3" stroke="#3f6a9a" stroke-width="1.300"/><path d="M5 9h6M5 11h4" stroke="#3f6a9a" stroke-width="1.200"/><path d="M4 2.500h5" stroke="#3f6a9a" stroke-width="1.400"/></svg>
<div style="left:866.7px;top:112.1px;width:1.0px;height:18.9px;background:#a9a9a9"></div>
<svg style="left:870.9px;top:113.5px" width="16" height="16" viewBox="0.400 0.400 15.200 15.200"><circle cx="8" cy="8" r="4.400" fill="#e66a6a" stroke="#cf4f4f" stroke-width="0.800"/></svg>
<svg style="left:895.3px;top:113.5px" width="16" height="16" viewBox="0.400 0.400 15.200 15.200"><rect x="3.500" y="3.500" width="9" height="9" fill="#c2c2c2" stroke="#adadad" stroke-width="1"/></svg>
<div style="left:917.5px;top:112.1px;width:1.0px;height:18.9px;background:#a9a9a9"></div>
<svg style="left:923.0px;top:113.5px" width="16" height="16" viewBox="0.400 0.400 15.200 15.200"><rect x="2" y="5.500" width="12" height="8.500" fill="#5c9a4a" stroke="#2f5f2a" stroke-width="1"/><path d="M5 5.500v-3h4v3" stroke="#2f5f2a" stroke-width="1.200" fill="#a8d08a"/><path d="M5 10h6" stroke="#d7ecc8" stroke-width="1.500"/></svg>
<svg style="left:946.4px;top:113.5px" width="16" height="16" viewBox="0.400 0.400 15.200 15.200"><path d="M2.500 13h11v-7" stroke="#111" stroke-width="2.600" fill="none"/></svg>
<svg style="left:1345.7px;top:113.3px" width="16" height="16" viewBox="0 0 16 16"><path d="M3.5 3.5h9v9h-9z" stroke="#444" fill="#fff"/><path d="M3.5 8h9M8 8v4.5" stroke="#222" stroke-width="1.6"/></svg>
<div style="left:416.8px;top:133.9px;width:28.4px;height:381.1px;background:#e9e9e9;border-right:1px solid #d0d0d0;"></div>
<div style="left:473.7px;top:497.7px;width:860.9px;height:17.2px;background:#e9eff8;"></div>
<div style="left:1111.9px;top:133.9px;width:1.0px;height:381.1px;background:#f3b7b7"></div>
<div style="left:457.1px;top:133.9px;width:1.3px;height:32.1px;background:#868686"></div>
<div style="left:457.7px;top:165.3px;width:5.4px;height:1.3px;background:#868686"></div>
<div style="left:457.1px;top:188.9px;width:1.3px;height:264.8px;background:#868686"></div>
<div style="left:457.7px;top:453.0px;width:5.4px;height:1.3px;background:#868686"></div>
<div style="left:451.9px;top:178.4px;width:11.7px;height:10.5px;background:#fff;border:1.5px solid #7d7d7d;box-sizing:border-box;"></div>
<div style="left:454.7px;top:182.9px;width:6.1px;height:1.4px;background:#333"></div>
<span class="m" style="top:139.0px;font-size:14.6px;line-height:19px;color:#1c1c1c;right:923.9px;-webkit-text-stroke:0.3px #1c1c1c;transform:scaleX(0.74);transform-origin:100% 50%;">14</span>
<span class="m" style="top:139.8px;font-size:11.571px;line-height:15px;color:#1a1a1a;left:474.6px;letter-spacing:1.037px;"><i style="color:#9a9a9a">     * @param </i><b style="color:#555">args</b><i style="color:#9a9a9a"> the command line arguments</i></span>
<span class="m" style="top:156.9px;font-size:14.6px;line-height:19px;color:#1c1c1c;right:923.9px;-webkit-text-stroke:0.3px #1c1c1c;transform:scaleX(0.74);transform-origin:100% 50%;">15</span>
<span class="m" style="top:157.7px;font-size:11.571px;line-height:15px;color:#1a1a1a;left:474.6px;letter-spacing:1.037px;"><i style="color:#9a9a9a">     */</i></span>
<svg style="left:428.9px;top:174.6px" width="16" height="16" viewBox="0 0 16 16"><circle cx="8" cy="6.500" r="4.200" fill="#f7d24a" stroke="#c59a1e" stroke-width="0.900"/><rect x="6" y="10.500" width="4" height="3.500" fill="#9a8a6a"/><circle cx="11.500" cy="11.500" r="3" fill="#e8b02e"/></svg>
<span class="m" style="top:175.7px;font-size:11.571px;line-height:15px;color:#1a1a1a;left:474.6px;letter-spacing:1.037px;">    <i style="color:#1515e2">public static void</i> <b>main</b>(String[] args)<i style="color:#1515e2">throws</i> <u style="text-decoration:none;border-bottom:1.6px solid #ecd45a">IOException</u> {</span>
<span class="m" style="top:192.8px;font-size:14.6px;line-height:19px;color:#1c1c1c;right:923.9px;-webkit-text-stroke:0.3px #1c1c1c;transform:scaleX(0.74);transform-origin:100% 50%;">17</span>
<span class="m" style="top:210.7px;font-size:14.6px;line-height:19px;color:#1c1c1c;right:923.9px;-webkit-text-stroke:0.3px #1c1c1c;transform:scaleX(0.74);transform-origin:100% 50%;">18</span>
<span class="m" style="top:228.7px;font-size:14.6px;line-height:19px;color:#1c1c1c;right:923.9px;-webkit-text-stroke:0.3px #1c1c1c;transform:scaleX(0.74);transform-origin:100% 50%;">19</span>
<span class="m" style="top:246.6px;font-size:14.6px;line-height:19px;color:#1c1c1c;right:923.9px;-webkit-text-stroke:0.3px #1c1c1c;transform:scaleX(0.74);transform-origin:100% 50%;">20</span>
<span class="m" style="top:247.5px;font-size:11.571px;line-height:15px;color:#1a1a1a;left:474.6px;letter-spacing:1.037px;">        <i style="color:#1515e2">int</i> array[]=<i style="color:#1515e2">new int</i>[6];</span>
<span class="m" style="top:264.5px;font-size:14.6px;line-height:19px;color:#1c1c1c;right:923.9px;-webkit-text-stroke:0.3px #1c1c1c;transform:scaleX(0.74);transform-origin:100% 50%;">21</span>
<span class="m" style="top:265.4px;font-size:11.571px;line-height:15px;color:#1a1a1a;left:474.6px;letter-spacing:1.037px;">        BufferedReader br=<i style="color:#1515e2">new</i> BufferedReader(<i style="color:#1515e2">new</i> InputStreamReader(System.<i style="color:#109a10">in</i>));</span>
<span class="m" style="top:282.5px;font-size:14.6px;line-height:19px;color:#1c1c1c;right:923.9px;-webkit-text-stroke:0.3px #1c1c1c;transform:scaleX(0.74);transform-origin:100% 50%;">22</span>
<span class="m" style="top:283.3px;font-size:11.571px;line-height:15px;color:#1a1a1a;left:474.6px;letter-spacing:1.037px;">        <i style="color:#1515e2">for</i>(<i style="color:#1515e2">int</i> x=0;x&lt;=5;x++){</span>
<span class="m" style="top:300.4px;font-size:14.6px;line-height:19px;color:#1c1c1c;right:923.9px;-webkit-text-stroke:0.3px #1c1c1c;transform:scaleX(0.74);transform-origin:100% 50%;">23</span>
<span class="m" style="top:301.3px;font-size:11.571px;line-height:15px;color:#1a1a1a;left:474.6px;letter-spacing:1.037px;">            System.<i style="color:#109a10">out</i>.println(<i style="color:#d08314">&quot;Introduzca la posicion  &quot;</i>+<i style="color:#d08314">&quot;[&quot;</i>+(x+1)+<i style="color:#d08314">&quot;]&quot;</i>);</span>
<span class="m" style="top:318.4px;font-size:14.6px;line-height:19px;color:#1c1c1c;right:923.9px;-webkit-text-stroke:0.3px #1c1c1c;transform:scaleX(0.74);transform-origin:100% 50%;">24</span>
<span class="m" style="top:319.2px;font-size:11.571px;line-height:15px;color:#1a1a1a;left:474.6px;letter-spacing:1.037px;">            String numero=br.readLine();</span>
<span class="m" style="top:336.3px;font-size:14.6px;line-height:19px;color:#1c1c1c;right:923.9px;-webkit-text-stroke:0.3px #1c1c1c;transform:scaleX(0.74);transform-origin:100% 50%;">25</span>
<span class="m" style="top:337.2px;font-size:11.571px;line-height:15px;color:#1a1a1a;left:474.6px;letter-spacing:1.037px;">            array[x]=Integer.parseInt(numero);</span>
<span class="m" style="top:354.3px;font-size:14.6px;line-height:19px;color:#1c1c1c;right:923.9px;-webkit-text-stroke:0.3px #1c1c1c;transform:scaleX(0.74);transform-origin:100% 50%;">26</span>
<span class="m" style="top:372.2px;font-size:14.6px;line-height:19px;color:#1c1c1c;right:923.9px;-webkit-text-stroke:0.3px #1c1c1c;transform:scaleX(0.74);transform-origin:100% 50%;">27</span>
<span class="m" style="top:373.0px;font-size:11.571px;line-height:15px;color:#1a1a1a;left:474.6px;letter-spacing:1.037px;">        }</span>
<span class="m" style="top:390.1px;font-size:14.6px;line-height:19px;color:#1c1c1c;right:923.9px;-webkit-text-stroke:0.3px #1c1c1c;transform:scaleX(0.74);transform-origin:100% 50%;">28</span>
<span class="m" style="top:391.0px;font-size:11.571px;line-height:15px;color:#1a1a1a;left:474.6px;letter-spacing:1.037px;">            <i style="color:#1515e2">for</i>(<i style="color:#1515e2">int</i> y=0;y&lt;=5;y++){</span>
<span class="m" style="top:408.1px;font-size:14.6px;line-height:19px;color:#1c1c1c;right:923.9px;-webkit-text-stroke:0.3px #1c1c1c;transform:scaleX(0.74);transform-origin:100% 50%;">29</span>
<span class="m" style="top:408.9px;font-size:11.571px;line-height:15px;color:#1a1a1a;left:474.6px;letter-spacing:1.037px;">                System.<i style="color:#109a10">out</i>.println(array[y]);</span>
<span class="m" style="top:426.0px;font-size:14.6px;line-height:19px;color:#1c1c1c;right:923.9px;-webkit-text-stroke:0.3px #1c1c1c;transform:scaleX(0.74);transform-origin:100% 50%;">30</span>
<span class="m" style="top:426.9px;font-size:11.571px;line-height:15px;color:#1a1a1a;left:474.6px;letter-spacing:1.037px;">            }</span>
<span class="m" style="top:444.0px;font-size:14.6px;line-height:19px;color:#1c1c1c;right:923.9px;-webkit-text-stroke:0.3px #1c1c1c;transform:scaleX(0.74);transform-origin:100% 50%;">31</span>
<span class="m" style="top:444.8px;font-size:11.571px;line-height:15px;color:#1a1a1a;left:474.6px;letter-spacing:1.037px;">    }</span>
<span class="m" style="top:461.9px;font-size:14.6px;line-height:19px;color:#1c1c1c;right:923.9px;-webkit-text-stroke:0.3px #1c1c1c;transform:scaleX(0.74);transform-origin:100% 50%;">32</span>
<span class="m" style="top:462.7px;font-size:11.571px;line-height:15px;color:#1a1a1a;left:474.6px;letter-spacing:1.037px;">}</span>
<span class="m" style="top:479.8px;font-size:14.6px;line-height:19px;color:#1c1c1c;right:923.9px;-webkit-text-stroke:0.3px #1c1c1c;transform:scaleX(0.74);transform-origin:100% 50%;">33</span>
<span class="m" style="top:497.8px;font-size:14.6px;line-height:19px;color:#1c1c1c;right:923.9px;-webkit-text-stroke:0.3px #1c1c1c;transform:scaleX(0.74);transform-origin:100% 50%;">34</span>
<div style="left:1334.6px;top:133.9px;width:14.3px;height:381.1px;background:#f0f0f0;"></div>
<div style="left:1335.1px;top:252.2px;width:13.4px;height:167.9px;background:#cdcdcd;"></div>
<svg style="left:1333.8px;top:133.8px" width="16" height="16" viewBox="0 0 16 16"><path d="M4 9.5l4-4l4 4" stroke="#555" stroke-width="1.5" fill="none"/></svg>
<svg style="left:1333.8px;top:499.0px" width="16" height="16" viewBox="0 0 16 16"><path d="M4 6l4 4l4-4" stroke="#555" stroke-width="1.5" fill="none"/></svg>
<div style="left:1348.9px;top:133.9px;width:14.7px;height:381.1px;background:#f0f0f0;"></div>
<div style="left:1353.2px;top:142.3px;width:6.9px;height:6.7px;background:#f5b82e;"></div>
<div style="left:1351.5px;top:269.0px;width:11.3px;height:2.9px;background:#f2bb3c;"></div>
<div style="left:1351.5px;top:277.8px;width:11.3px;height:2.7px;background:#b5b36a;"></div>
<div style="left:1354.1px;top:410.2px;width:5.2px;height:2.3px;background:#555;"></div>
<div style="left:415.7px;top:519.1px;width:949.0px;height:185.5px;background:#fff;border:1px solid #a5a5a5;box-sizing:border-box;"></div>
<div style="left:416.6px;top:520.0px;width:947.2px;height:19.5px;background:#f0f0f0;border-bottom:1px solid #b4b4b4;"></div>
<div style="left:416.6px;top:520.0px;width:140.2px;height:20.4px;background:#dde9f6;border:1px solid #a9c3df;box-sizing:border-box;"></div>
<span class="s" style="top:523.5px;font-size:11px;line-height:14px;color:#000;left:420.5px;font-weight:bold;letter-spacing:0.15px;">Output - Vector (run)</span>
<svg style="left:543.2px;top:525.5px" width="10" height="10" viewBox="0 0 10 10"><path d="M1.500 1.500l7 7M8.500 1.500l-7 7" stroke="#333" stroke-width="1.300"/></svg>
<svg style="left:1348.1px;top:524.0px" width="12" height="12" viewBox="0 0 12 12"><path d="M0.500 6h11" stroke="#333" stroke-width="2.200"/></svg>
<div style="left:416.8px;top:540.3px;width:26.2px;height:163.5px;background:#f0f0f0;border-right:1px solid #d9d9d9;"></div>
<svg style="left:418.8px;top:543.4px" width="16" height="16" viewBox="0 0 16 16"><path d="M1 1l7.500 7l-7.500 7z" fill="#66c13a" stroke="#3f8c1f" stroke-width="0.700"/><path d="M8 1l7.500 7l-7.500 7z" fill="#66c13a" stroke="#3f8c1f" stroke-width="0.700"/></svg>
<svg style="left:418.8px;top:566.5px" width="16" height="16" viewBox="0 0 16 16"><path d="M1 1l7.500 7l-7.500 7z" fill="#d3d43a" stroke="#9a9c1c" stroke-width="0.700"/><path d="M8 1l7.500 7l-7.500 7z" fill="#d3d43a" stroke="#9a9c1c" stroke-width="0.700"/></svg>
<svg style="left:419.0px;top:590.2px" width="16" height="16" viewBox="0 0 16 16"><rect x="2.5" y="2.5" width="11" height="11" fill="#c9a7a7" stroke="#b48f8f"/></svg>
<svg style="left:419.4px;top:613.5px" width="16" height="16" viewBox="0 0 16 16"><circle cx="5.500" cy="5.500" r="4" fill="#b4c0ce" stroke="#6f7f92" stroke-width="1.400"/><circle cx="10.500" cy="10.500" r="4" fill="#9aabbd" stroke="#5f6f82" stroke-width="1.400"/><path d="M1 14l5-3" stroke="#c9a03a" stroke-width="2"/><circle cx="5.500" cy="5.500" r="1.300" fill="#f0f0f0"/><circle cx="10.500" cy="10.500" r="1.300" fill="#f0f0f0"/></svg>
<span class="m" style="top:538.2px;font-size:10.092px;line-height:13px;color:#111;left:459.9px;letter-spacing:0.905px;-webkit-text-stroke:0.2px #111;">9</span>
<span class="m" style="top:555.4px;font-size:10.092px;line-height:13px;color:#111;left:459.9px;letter-spacing:0.905px;-webkit-text-stroke:0.2px #111;">Introduzca la posicion  [5]</span>
<span class="m" style="top:571.2px;font-size:10.092px;line-height:13px;color:#111;left:459.9px;letter-spacing:0.905px;-webkit-text-stroke:0.2px #111;">9</span>
<span class="m" style="top:587.3px;font-size:10.092px;line-height:13px;color:#111;left:459.9px;letter-spacing:0.905px;-webkit-text-stroke:0.2px #111;">Introduzca la posicion  [6]</span>
<span class="m" style="top:603.3px;font-size:10.092px;line-height:13px;color:#111;left:459.9px;letter-spacing:0.905px;-webkit-text-stroke:0.2px #111;">7</span>
<span class="m" style="top:619.0px;font-size:10.092px;line-height:13px;color:#111;left:459.9px;letter-spacing:0.905px;-webkit-text-stroke:0.2px #111;">5</span>
<span class="m" style="top:634.8px;font-size:10.092px;line-height:13px;color:#111;left:459.9px;letter-spacing:0.905px;-webkit-text-stroke:0.2px #111;">4</span>
<span class="m" style="top:650.7px;font-size:10.092px;line-height:13px;color:#111;left:459.9px;letter-spacing:0.905px;-webkit-text-stroke:0.2px #111;">6</span>
<span class="m" style="top:666.4px;font-size:10.092px;line-height:13px;color:#111;left:459.9px;letter-spacing:0.905px;-webkit-text-stroke:0.2px #111;">9</span>
<span class="m" style="top:682.4px;font-size:10.092px;line-height:13px;color:#111;left:459.9px;letter-spacing:0.905px;-webkit-text-stroke:0.2px #111;">8</span>
<span class="m" style="top:698.1px;font-size:10.092px;line-height:13px;color:#111;left:459.9px;letter-spacing:0.905px;-webkit-text-stroke:0.2px #111;">2</span>
<div style="left:1347.2px;top:540.3px;width:16.4px;height:163.5px;background:#f0f0f0;"></div>
<div style="left:1347.6px;top:610.6px;width:15.6px;height:60.2px;background:#a6a6a6;"></div>
<svg style="left:1347.0px;top:541.4px" width="16" height="16" viewBox="0 0 16 16"><path d="M4 9.5l4-4l4 4" stroke="#555" stroke-width="1.5" fill="none"/></svg>
<svg style="left:1347.0px;top:687.4px" width="16" height="16" viewBox="0 0 16 16"><path d="M4 6l4 4l4-4" stroke="#555" stroke-width="1.5" fill="none"/></svg>
<div style="left:0.0px;top:704.6px;width:1366.0px;height:25.2px;background:#f0f0f0;"></div>
<div style="left:416.8px;top:703.4px;width:947.2px;height:1.9px;background:#a5a5a5;"></div>
<div style="left:1227.6px;top:708.6px;width:1.0px;height:17.8px;background:#c8c8c8"></div>
<span class="s" style="top:711.1px;font-size:11px;line-height:14px;color:#000;left:1285.9px;transform:translateX(-50%);">34:6</span>
<span class="s" style="top:711.1px;font-size:11px;line-height:14px;color:#000;left:1353.7px;transform:translateX(-50%);">INS</span>
<div style="left:1336.3px;top:708.6px;width:1.0px;height:17.8px;background:#c8c8c8"></div>
<div style="left:0.0px;top:729.8px;width:1366.0px;height:38.2px;background:#0b2e4d;"></div>
<div style="left:342.4px;top:729.8px;width:48.7px;height:38.2px;background:#1e5486;"></div>
<div style="left:393.9px;top:729.8px;width:44.4px;height:38.2px;background:#123f69;"></div>
<div style="left:294.8px;top:766.1px;width:45.4px;height:1.9px;background:#8cbce6;"></div>
<div style="left:342.4px;top:766.1px;width:48.7px;height:1.9px;background:#8cbce6;"></div>
<div style="left:393.2px;top:766.1px;width:44.4px;height:1.9px;background:#8cbce6;"></div>
<svg style="left:14.2px;top:739.3px" width="20" height="20" viewBox="0 0 16 16"><path d="M1 3.200l6-0.900v5.200h-6zM8 2.200l7-1v6.300h-7zM1 8.500h6v5.200l-6-0.900zM8 8.500h7v6.300l-7-1z" fill="#fff"/></svg>
<svg style="left:61.8px;top:739.3px" width="20" height="20" viewBox="0 0 16 16"><circle cx="9.500" cy="6.500" r="4" fill="none" stroke="#fff" stroke-width="1.500"/><path d="M6.800 9.500l-4.300 4.500" stroke="#fff" stroke-width="1.700"/></svg>
<svg style="left:110.5px;top:739.3px" width="20" height="20" viewBox="0 0 16 16"><circle cx="8" cy="8" r="5.300" fill="none" stroke="#fff" stroke-width="2.100"/></svg>
<svg style="left:158.2px;top:739.3px" width="20" height="20" viewBox="0 0 16 16"><rect x="4.500" y="3.500" width="7" height="9" fill="none" stroke="#fff" stroke-width="1.500"/><path d="M1.800 4.500v7M14.200 4.500v7M11.500 8h2.500M2 8h2.500" stroke="#fff" stroke-width="1.500"/></svg>
<svg style="left:208.2px;top:737.8px" width="23" height="23" viewBox="0 0 16 16"><path d="M1 3h5l1.500 1.500h7.500v9.500h-14z" fill="#f5c84a"/><rect x="1" y="7" width="14" height="7" fill="#f9dc7a"/><rect x="4" y="10" width="8" height="4" fill="#4a9de0"/></svg>
<svg style="left:257.3px;top:737.8px" width="23" height="23" viewBox="0 0 16 16"><circle cx="8" cy="8" r="7.300" fill="#1ed760"/><path d="M4 6c3-1 6-0.700 8.500 0.600M4.500 8.500c2.500-0.800 5-0.500 7 0.600M5 10.800c2-0.600 4-0.400 5.500 0.500" stroke="#0b2e4d" stroke-width="1.300" fill="none" stroke-linecap="round"/></svg>
<svg style="left:305.5px;top:737.8px" width="23" height="23" viewBox="0 0 16 16"><circle cx="11" cy="4" r="2.500" fill="#7b83eb"/><rect x="7" y="6" width="8" height="7.500" rx="1.500" fill="#5b63c9"/><rect x="1.500" y="4" width="9" height="9" rx="1" fill="#4b53bc"/><path d="M4 6.500h4M6 6.500v4.500" stroke="#fff" stroke-width="1.300"/><circle cx="13" cy="12.500" r="2.300" fill="#9ac93a"/></svg>
<svg style="left:353.6px;top:737.8px" width="23" height="23" viewBox="0 0 16 16"><path d="M8 1l6 2.800v8.200l-6 3.200l-6-3.200v-8.200z" fill="#dfe9f5"/><path d="M8 1l6 2.800l-6 3l-6-3z" fill="#f7fafd"/><path d="M8 6.800v8.400l-6-3.200v-8.200z" fill="#8fb0d3"/></svg>
<svg style="left:401.8px;top:737.8px" width="23" height="23" viewBox="0 0 16 16"><path d="M2 2.500h9.500v10h-9.500z" fill="#2b7fd0"/><path d="M3.500 1.500h9v9.500h-9z" fill="#5fb0ea"/><path d="M4.500 7.500a3.500 3.500 0 0 0 6.500 1.500c-2.500 1-5-0.500-4-3z" fill="#3fc87a"/><circle cx="11.300" cy="11.300" r="4.200" fill="#e0262c"/><path d="M9.300 10.300h1.600v2.400M12 10h1.800v2.800h-1.800z" stroke="#fff" stroke-width="0.600" fill="none"/></svg>
<svg style="left:1125.5px;top:739.3px" width="20" height="20" viewBox="0 0 16 16"><path d="M3.500 10l4.500-4.500l4.500 4.500" stroke="#fff" stroke-width="1.400" fill="none"/></svg>
<svg style="left:1148.7px;top:739.3px" width="20" height="20" viewBox="0 0 16 16"><rect x="5.500" y="1.500" width="5" height="8" rx="1" fill="#fff"/><rect x="4.500" y="9" width="7" height="4.500" fill="#e8e8e8"/></svg>
<svg style="left:1173.8px;top:739.3px" width="20" height="20" viewBox="0 0 16 16"><rect x="2" y="5" width="11.500" height="6.500" fill="#fff"/><rect x="13.500" y="7" width="1.500" height="2.500" fill="#fff"/></svg>
<svg style="left:1200.2px;top:739.3px" width="20" height="20" viewBox="0 0 16 16"><path d="M3 12.500a9 9 0 0 1 9-9M6 12.500a6 6 0 0 1 6-6M9 12.500a3 3 0 0 1 3-3" stroke="#9fb0c2" stroke-width="1.300" fill="none"/></svg>
<svg style="left:1221.8px;top:739.3px" width="20" height="20" viewBox="0 0 16 16"><path d="M2 6h3l3.500-3v10l-3.500-3h-3z" fill="#fff"/><path d="M10.500 5.500a4 4 0 0 1 0 5M12.500 3.500a7 7 0 0 1 0 9" stroke="#fff" stroke-width="1.100" fill="none"/></svg>
<span class="s" style="top:733.1px;font-size:12.3px;line-height:16px;color:#fff;left:1278.4px;transform:translateX(-50%);letter-spacing:-0.2px;">03:44 p. m.</span>
<span class="s" style="top:749.5px;font-size:12.3px;line-height:16px;color:#fff;left:1278.4px;transform:translateX(-50%);letter-spacing:-0.2px;">30/09/2020</span>
<svg style="left:1324.0px;top:739.3px" width="20" height="20" viewBox="0 0 16 16"><path d="M2 2.500h12v9h-7l-2.500 2.500v-2.500h-2.500z" stroke="#fff" stroke-width="1.300" fill="none"/></svg>
</div></div>
<div class="wrap" style="left:80px;top:501px;width:602px;height:351px">
<div class="shot" style="left:2.25px;top:2.80px;width:1366px;height:768px;transform:scale(0.43737,0.45078)">
<div style="left:0.0px;top:0.0px;width:1366.0px;height:22.8px;background:#0063b1;"></div>
<svg style="left:1.3px;top:3.5px" width="16" height="16" viewBox="0 0 16 16"><path d="M8 1.5l5.5 2.5v7.5l-5.5 3l-5.5-3v-7.5z" fill="#dfe9f5"/><path d="M8 1.5l5.5 2.5l-5.5 2.7l-5.5-2.7z" fill="#f4f8fc"/><path d="M8 6.7v7.8l-5.5-3v-7.5z" fill="#9fb9d6"/></svg>
<span class="s" style="top:3.8px;font-size:12px;line-height:16px;color:#fff;left:22.3px;letter-spacing:-0.2px;">Vector - NetBeans IDE 8.2</span>
<svg style="left:1242.1px;top:3.1px" width="16" height="16" viewBox="0 0 16 16"><path d="M3 8.500h10" stroke="#fff" stroke-width="1" fill="none"/></svg>
<svg style="left:1287.1px;top:2.6px" width="16" height="16" viewBox="0 0 16 16"><path d="M3.500 5.500h7v7h-7zM5.500 5.500v-2h7v7h-2" stroke="#fff" stroke-width="1" fill="none"/></svg>
<svg style="left:1332.8px;top:3.1px" width="16" height="16" viewBox="0 0 16 16"><path d="M3 3l10 10M13 3l-10 10" stroke="#fff" stroke-width="1.100" fill="none"/></svg>
<div style="left:0.0px;top:22.8px;width:1366.0px;height:24.6px;background:#fff;"></div>
<span class="s" style="top:27.3px;font-size:12px;line-height:16px;color:#000;left:4.5px;letter-spacing:-0.05px;">File</span>
<span class="s" style="top:27.3px;font-size:12px;line-height:16px;color:#000;left:32.1px;letter-spacing:-0.05px;">Edit</span>
<span class="s" style="top:27.3px;font-size:12px;line-height:16px;color:#000;left:60.5px;letter-spacing:-0.05px;">View</span>
<span class="s" style="top:27.3px;font-size:12px;line-height:16px;color:#000;left:93.9px;letter-spacing:-0.05px;">Navigate</span>
<span class="s" style="top:27.3px;font-size:12px;line-height:16px;color:#000;left:149.4px;letter-spacing:-0.05px;">Source</span>
<span class="s" style="top:27.3px;font-size:12px;line-height:16px;color:#000;left:193.3px;letter-spacing:-0.05px;">Refactor</span>
<span class="s" style="top:27.3px;font-size:12px;line-height:16px;color:#000;left:247.7px;letter-spacing:-0.05px;">Run</span>
<span class="s" style="top:27.3px;font-size:12px;line-height:16px;color:#000;left:275.4px;letter-spacing:-0.05px;">Debug</span>
<span class="s" style="top:27.3px;font-size:12px;line-height:16px;color:#000;left:319.5px;letter-spacing:-0.05px;">Profile</span>
<span class="s" style="top:27.3px;font-size:12px;line-height:16px;color:#000;left:361.6px;letter-spacing:-0.05px;">Team</span>
<span class="s" style="top:27.3px;font-size:12px;line-height:16px;color:#000;left:398.9px;letter-spacing:-0.05px;">Tools</span>
<span class="s" style="top:27.3px;font-size:12px;line-height:16px;color:#000;left:435.7px;letter-spacing:-0.05px;">Window</span>
<span class="s" style="top:27.3px;font-size:12px;line-height:16px;color:#000;left:488.3px;letter-spacing:-0.05px;">Help</span>
<div style="left:1155.2px;top:23.3px;width:209.7px;height:21.3px;background:#fff;border:1px solid #abadb3;box-sizing:border-box;"></div>
<svg style="left:1161.1px;top:25.9px" width="16" height="16" viewBox="0 0 16 16"><circle cx="6.5" cy="6.5" r="3.6" fill="none" stroke="#333" stroke-width="1.7"/><path d="M9.2 9.2l4 4" stroke="#333" stroke-width="2.2"/><path d="M12.5 6.5h4l-2 2.4z" fill="#222"/></svg>
<span class="s" style="top:27.2px;font-size:11px;line-height:14px;color:#8a8a8a;left:1184.7px;">Search (Ctrl+I)</span>
<div style="left:0.0px;top:47.5px;width:1366.0px;height:31.1px;background:#f0f0f0;"></div>
<div style="left:0.0px;top:46.8px;width:1366.0px;height:1.3px;background:#cbc8c6"></div>
<div style="left:0.0px;top:77.7px;width:1366.0px;height:1.6px;background:#a9a9a9"></div>
<svg style="left:2.4px;top:50.8px" width="6" height="24" viewBox="0 0 6 24"><path d="M3 4v16" stroke="#c4c4c4" stroke-width="2" stroke-dasharray="1.5 2"/></svg>
<svg style="left:12.6px;top:50.8px" width="24" height="24" viewBox="1.600 1.600 20.800 20.800"><path d="M6.500 5.500h10l5 5v12h-15z" fill="#f6f9fd" stroke="#8da0b8" stroke-width="1.400"/><circle cx="7" cy="7" r="5.200" fill="#4fb233" stroke="#2f8a1c" stroke-width="0.800"/><path d="M7 4v6M4 7h6" stroke="#fff" stroke-width="1.800"/></svg>
<svg style="left:40.9px;top:50.8px" width="24" height="24" viewBox="1.600 1.600 20.800 20.800"><path d="M3.500 6.500h9l2 2.500h7.500v13h-18.500z" fill="#f0b866" stroke="#c98f3a" stroke-width="1.300"/><path d="M4 11.500h17.500v10h-17.500z" fill="#f6cf93"/><circle cx="6.500" cy="7" r="5.200" fill="#4fb233" stroke="#2f8a1c" stroke-width="0.800"/><path d="M6.500 4v6M3.500 7h6" stroke="#fff" stroke-width="1.800"/></svg>
<svg style="left:71.3px;top:50.8px" width="24" height="24" viewBox="1.600 1.600 20.800 20.800"><path d="M2.500 4.500h9l2 2h8.500v15.500h-19.500z" fill="#b4cbe4" stroke="#6e8fb5" stroke-width="1.200"/><path d="M2.500 13.500h19.500v8.500h-19.500z" fill="#3b6a9e"/><rect x="13.500" y="3" width="8.500" height="8" fill="#f0a94f" stroke="#c98a33" stroke-width="0.900"/></svg>
<svg style="left:102.9px;top:50.8px" width="24" height="24" viewBox="1.600 1.600 20.800 20.800"><rect x="2.500" y="3" width="13" height="13" fill="#a4aab1"/><rect x="9" y="9.500" width="13" height="13" fill="#8d949c" stroke="#c3c7cc" stroke-width="1.200"/></svg>
<svg style="left:131.3px;top:50.8px" width="6" height="24" viewBox="0 0 6 24"><path d="M3 4v16" stroke="#c4c4c4" stroke-width="2" stroke-dasharray="1.5 2"/></svg>
<svg style="left:141.1px;top:50.8px" width="24" height="24" viewBox="1.600 1.600 20.800 20.800"><path d="M9 14c1-5 9-6 10 0c0.500 3.500-2 6-6 6" stroke="#c4a678" stroke-width="4.200" fill="none"/><path d="M3.500 8.500l1.500 9.500l9-2.500z" fill="#c4a678"/></svg>
<svg style="left:172.2px;top:50.8px" width="24" height="24" viewBox="1.600 1.600 20.800 20.800"><g transform="translate(24,0) scale(-1,1)"><path d="M9 14c1-5 9-6 10 0c0.500 3.500-2 6-6 6" stroke="#9fb0bd" stroke-width="4.200" fill="none"/><path d="M3.500 8.500l1.500 9.500l9-2.500z" fill="#9fb0bd"/></g></svg>
<svg style="left:201.7px;top:50.8px" width="6" height="24" viewBox="0 0 6 24"><path d="M3 4v16" stroke="#c4c4c4" stroke-width="2" stroke-dasharray="1.5 2"/></svg>
<div style="left:215.0px;top:52.4px;width:137.4px;height:20.4px;background:#fff;border:1px solid #abadb3;box-sizing:border-box;"></div>
<div style="left:333.2px;top:53.5px;width:18.1px;height:18.2px;background:#e4e4e4;"></div>
<svg style="left:334.4px;top:55.0px" width="16" height="16" viewBox="0 0 16 16"><path d="M4.500 6.500l3.500 3.500l3.500-3.500" stroke="#555" stroke-width="1.200" fill="none"/></svg>
<span class="s" style="top:55.8px;font-size:11px;line-height:14px;color:#000;left:219.8px;">&lt;default config&gt;</span>
<svg style="left:360.1px;top:50.8px" width="24" height="24" viewBox="1.600 1.600 20.800 20.800"><path d="M5 5h14v4h-3.500v-1.500h-7v1.500h-3.500z" fill="#e4e8ee" stroke="#8f9bab" stroke-width="1.200" stroke-dasharray="1.600 1.400"/><rect x="10" y="9" width="4" height="12" rx="1.800" fill="#5a96d4" stroke="#3f78b8" stroke-width="0.700"/></svg>
<svg style="left:392.6px;top:50.8px" width="24" height="24" viewBox="1.600 1.600 20.800 20.800"><path d="M3.500 5h12v4h-3v-1.500h-6v1.500h-3z" fill="#e4e8ee" stroke="#8f9bab" stroke-width="1.200" stroke-dasharray="1.600 1.400"/><rect x="7.500" y="9" width="4" height="11.500" rx="1.800" fill="#5a96d4" stroke="#3f78b8" stroke-width="0.700"/><path d="M13.500 10l6.500-3l1.500 13.500h-8z" fill="#e6a961" stroke="#b87c33" stroke-width="0.800"/><path d="M15 13v6M17.500 12v7" stroke="#c98a3a" stroke-width="0.800"/></svg>
<svg style="left:424.8px;top:50.8px" width="24" height="24" viewBox="1.600 1.600 20.800 20.800"><path d="M7.500 4.500l11 7.500l-11 7.500z" fill="#a9c59a" stroke="#97b58a" stroke-width="1.100"/></svg>
<svg style="left:451.3px;top:58.8px" width="8" height="8" viewBox="0 0 8 8"><path d="M1.500 3h5l-2.500 3z" fill="#333"/></svg>
<svg style="left:463.2px;top:50.8px" width="24" height="24" viewBox="1.600 1.600 20.800 20.800"><rect x="4" y="3" width="12" height="17" fill="#e9e4de" stroke="#8c8580" stroke-width="1"/><rect x="6" y="5" width="4" height="4" fill="#d9534f"/><rect x="6" y="11" width="4" height="4" fill="#9aa0a6"/><rect x="11" y="5" width="4" height="4" fill="#e8a0a0"/><path d="M12 11l9 5l-9 5z" fill="#5cb531" stroke="#3f8c1f" stroke-width="0.8"/></svg>
<svg style="left:491.6px;top:58.8px" width="8" height="8" viewBox="0 0 8 8"><path d="M1.500 3h5l-2.500 3z" fill="#333"/></svg>
<svg style="left:503.7px;top:50.8px" width="24" height="24" viewBox="1.600 1.600 20.800 20.800"><circle cx="12" cy="12" r="8.500" fill="#eef4fb" stroke="#5c7fa8" stroke-width="1.800"/><path d="M12 12v-6M12 12l4 2" stroke="#44688f" stroke-width="1.300"/><path d="M13 12l8 4.500l-8 4.500z" fill="#5cb531" stroke="#3f8c1f" stroke-width="0.700"/></svg>
<svg style="left:532.7px;top:58.8px" width="8" height="8" viewBox="0 0 8 8"><path d="M1.500 3h5l-2.500 3z" fill="#333"/></svg>
<div style="left:1.7px;top:87.6px;width:410.9px;height:308.1px;background:#fff;border:1px solid #a5a5a5;box-sizing:border-box;"></div>
<div style="left:2.6px;top:88.3px;width:409.0px;height:19.3px;background:#efefef;border-bottom:1px solid #b4b4b4;"></div>
<div style="left:2.6px;top:88.3px;width:70.4px;height:20.4px;background:#fff;border-right:1px solid #c8c8c8;"></div>
<span class="s" style="top:91.3px;font-size:11px;line-height:14px;color:#000;left:7.7px;font-weight:bold;letter-spacing:-0.05px;">Projects</span>
<svg style="left:60.3px;top:93.5px" width="10" height="10" viewBox="0 0 10 10"><path d="M1.500 1.500l7 7M8.500 1.500l-7 7" stroke="#333" stroke-width="1.300"/></svg>
<span class="s" style="top:91.3px;font-size:11px;line-height:14px;color:#000;left:79.0px;font-weight:bold;letter-spacing:-0.05px;">Files</span>
<div style="left:121.9px;top:88.7px;width:1.0px;height:18.6px;background:#c8c8c8"></div>
<span class="s" style="top:91.3px;font-size:11px;line-height:14px;color:#000;left:131.6px;font-weight:bold;letter-spacing:-0.05px;">Services</span>
<div style="left:202.0px;top:88.7px;width:1.0px;height:18.6px;background:#c8c8c8"></div>
<svg style="left:393.5px;top:92.5px" width="12" height="12" viewBox="0 0 12 12"><path d="M0.500 6h11" stroke="#333" stroke-width="2.200"/></svg>
<svg style="left:5.7px;top:111.0px" width="14" height="14" viewBox="0 0 14 14"><circle cx="7" cy="7" r="4.500" fill="#eef1f6" stroke="#c5ccd8" stroke-width="1"/></svg>
<svg style="left:23.7px;top:109.5px" width="17" height="17" viewBox="1.300 1.300 13.400 13.400"><path d="M2.500 7h10.500c0 5-2 7.500-5.250 7.500s-5.250-2.500-5.250-7.500z" fill="#cc4a32" stroke="#8f2f1c" stroke-width="0.800"/><path d="M13 8.500c2.500 0 2.500 3.500-0.700 3.500" stroke="#a33a22" stroke-width="1.100" fill="none"/><path d="M5.500 5.500c-1-1.500 1-2 0-3.500M9 5.500c-1-1.500 1-2 0-3.500" stroke="#c98a5a" stroke-width="1.100" fill="none"/><path d="M3 7h10" stroke="#f0b08a" stroke-width="1.200"/><circle cx="4.500" cy="11.500" r="3.800" fill="#d8322b"/><path d="M3 10l3 3M6 10l-3 3" stroke="#fff" stroke-width="0.900"/></svg>
<span class="s" style="top:111.2px;font-size:11px;line-height:14px;color:#000;left:48.2px;">Aaron</span>
<svg style="left:24.9px;top:129.0px" width="14" height="14" viewBox="0 0 14 14"><rect x="2.500" y="2.500" width="9" height="9" fill="#fff" stroke="#9ba5b7" stroke-width="1.100"/><path d="M4.500 7h5" stroke="#333" stroke-width="1.200"/></svg>
<svg style="left:42.9px;top:127.5px" width="17" height="17" viewBox="1.300 1.300 13.400 13.400"><path d="M3 4.500h4.500l1.500 1.500h4.500v8.500h-10.500z" fill="#e9bb4e" stroke="#b98a26" stroke-width="0.900"/><path d="M3.500 7.500h9.500v6.500h-9.500z" fill="#f2d272"/><circle cx="4.500" cy="11.500" r="3.800" fill="#d8322b"/><path d="M3 10l3 3M6 10l-3 3" stroke="#fff" stroke-width="0.900"/></svg>
<span class="s" style="top:129.2px;font-size:11px;line-height:14px;color:#000;left:67.4px;">Source Packages</span>
<svg style="left:44.1px;top:147.0px" width="14" height="14" viewBox="0 0 14 14"><rect x="2.500" y="2.500" width="9" height="9" fill="#fff" stroke="#9ba5b7" stroke-width="1.100"/><path d="M4.500 7h5" stroke="#333" stroke-width="1.200"/></svg>
<svg style="left:62.1px;top:145.5px" width="17" height="17" viewBox="1.300 1.300 13.400 13.400"><rect x="3" y="3.500" width="10" height="10.500" fill="#e8b84a" stroke="#b3791f" stroke-width="0.900"/><path d="M3 7h10M8 3.500v10.500" stroke="#b3791f" stroke-width="0.900"/><circle cx="4.500" cy="11.500" r="3.800" fill="#d8322b"/><path d="M3 10l3 3M6 10l-3 3" stroke="#fff" stroke-width="0.900"/></svg>
<span class="s" style="top:147.2px;font-size:11px;line-height:14px;color:#000;left:86.7px;">&lt;default package&gt;</span>
<div style="left:70.3px;top:171.4px;width:8.0px;height:1.0px;background:#c3c8d2"></div>
<svg style="left:81.4px;top:163.4px" width="17" height="17" viewBox="1.300 1.300 13.400 13.400"><path d="M3.500 1.500h7l3 3v10h-10z" fill="#f3f3ee" stroke="#9a9a92" stroke-width="1"/><circle cx="9.500" cy="10" r="4" fill="#5aa83a"/><path d="M8 10a1.500 1.500 0 1 1 1.500 1.500" stroke="#e8f5e0" stroke-width="1.200" fill="none"/><path d="M4.500 6h5M4.500 8h3" stroke="#b5b5ad" stroke-width="0.800"/></svg>
<span class="s" style="top:165.1px;font-size:11px;line-height:14px;color:#000;left:105.9px;">Arreglo.java</span>
<div style="left:70.3px;top:189.4px;width:8.0px;height:1.0px;background:#c3c8d2"></div>
<svg style="left:81.4px;top:181.4px" width="17" height="17" viewBox="1.300 1.300 13.400 13.400"><path d="M3.500 1.500h7l3 3v10h-10z" fill="#f3f3ee" stroke="#9a9a92" stroke-width="1"/><circle cx="9.500" cy="10" r="4" fill="#5aa83a"/><path d="M8 10a1.500 1.500 0 1 1 1.500 1.500" stroke="#e8f5e0" stroke-width="1.200" fill="none"/><path d="M4.500 6h5M4.500 8h3" stroke="#b5b5ad" stroke-width="0.800"/><circle cx="4.500" cy="11.500" r="3.800" fill="#d8322b"/><path d="M3 10l3 3M6 10l-3 3" stroke="#fff" stroke-width="0.900"/></svg>
<span class="s" style="top:183.1px;font-size:11px;line-height:14px;color:#000;left:105.9px;">Arreglo2.java</span>
<svg style="left:24.9px;top:200.9px" width="14" height="14" viewBox="0 0 14 14"><rect x="2.500" y="2.500" width="9" height="9" fill="#fff" stroke="#9ba5b7" stroke-width="1.100"/><path d="M4.500 7h5M7 4.500v5" stroke="#333" stroke-width="1.200"/></svg>
<svg style="left:42.9px;top:199.4px" width="17" height="17" viewBox="1.300 1.300 13.400 13.400"><path d="M3 4.500h4.500l1.500 1.500h4.500v8.500h-10.500z" fill="#e9bb4e" stroke="#b98a26" stroke-width="0.900"/><path d="M3.500 7.500h9.500v6.500h-9.500z" fill="#f2d272"/></svg>
<span class="s" style="top:201.1px;font-size:11px;line-height:14px;color:#000;left:67.4px;">Test Packages</span>
<svg style="left:24.9px;top:218.6px" width="14" height="14" viewBox="0 0 14 14"><rect x="2.500" y="2.500" width="9" height="9" fill="#fff" stroke="#9ba5b7" stroke-width="1.100"/><path d="M4.500 7h5M7 4.500v5" stroke="#333" stroke-width="1.200"/></svg>
<svg style="left:42.9px;top:217.1px" width="17" height="17" viewBox="1.300 1.300 13.400 13.400"><path d="M3 4.500h4.500l1.500 1.500h4.500v8.500h-10.500z" fill="#e9bb4e" stroke="#b98a26" stroke-width="0.900"/><path d="M3.500 7.500h9.500v6.500h-9.500z" fill="#f2d272"/><path d="M8 8.500h5.500v6h-5.500z" fill="#6b4a2a"/><path d="M9 8.500v6" stroke="#c9a46a" stroke-width="0.800"/></svg>
<span class="s" style="top:218.8px;font-size:11px;line-height:14px;color:#000;left:67.4px;">Libraries</span>
<svg style="left:24.9px;top:236.6px" width="14" height="14" viewBox="0 0 14 14"><rect x="2.500" y="2.500" width="9" height="9" fill="#fff" stroke="#9ba5b7" stroke-width="1.100"/><path d="M4.500 7h5M7 4.500v5" stroke="#333" stroke-width="1.200"/></svg>
<svg style="left:42.9px;top:235.1px" width="17" height="17" viewBox="1.300 1.300 13.400 13.400"><path d="M3 4.500h4.500l1.500 1.500h4.500v8.500h-10.500z" fill="#e9bb4e" stroke="#b98a26" stroke-width="0.900"/><path d="M3.500 7.500h9.500v6.500h-9.500z" fill="#f2d272"/><path d="M8 8.500h5.500v6h-5.500z" fill="#6b4a2a"/><path d="M9 8.500v6" stroke="#c9a46a" stroke-width="0.800"/></svg>
<span class="s" style="top:236.8px;font-size:11px;line-height:14px;color:#000;left:67.4px;">Test Libraries</span>
<svg style="left:5.7px;top:254.5px" width="14" height="14" viewBox="0 0 14 14"><rect x="2.500" y="2.500" width="9" height="9" fill="#fff" stroke="#9ba5b7" stroke-width="1.100"/><path d="M4.500 7h5M7 4.500v5" stroke="#333" stroke-width="1.200"/></svg>
<svg style="left:23.7px;top:253.0px" width="17" height="17" viewBox="1.300 1.300 13.400 13.400"><path d="M2.500 7h10.500c0 5-2 7.500-5.250 7.500s-5.250-2.500-5.250-7.500z" fill="#cc4a32" stroke="#8f2f1c" stroke-width="0.800"/><path d="M13 8.500c2.500 0 2.500 3.500-0.700 3.500" stroke="#a33a22" stroke-width="1.100" fill="none"/><path d="M5.500 5.500c-1-1.500 1-2 0-3.500M9 5.500c-1-1.500 1-2 0-3.500" stroke="#c98a5a" stroke-width="1.100" fill="none"/><path d="M3 7h10" stroke="#f0b08a" stroke-width="1.200"/></svg>
<span class="s" style="top:254.8px;font-size:11px;line-height:14px;color:#000;left:48.2px;">Estructuraq</span>
<svg style="left:5.7px;top:272.5px" width="14" height="14" viewBox="0 0 14 14"><rect x="2.500" y="2.500" width="9" height="9" fill="#fff" stroke="#9ba5b7" stroke-width="1.100"/><path d="M4.500 7h5M7 4.500v5" stroke="#333" stroke-width="1.200"/></svg>
<svg style="left:23.7px;top:271.0px" width="17" height="17" viewBox="1.300 1.300 13.400 13.400"><path d="M2.500 7h10.500c0 5-2 7.500-5.250 7.500s-5.250-2.500-5.250-7.500z" fill="#cc4a32" stroke="#8f2f1c" stroke-width="0.800"/><path d="M13 8.500c2.500 0 2.500 3.500-0.700 3.500" stroke="#a33a22" stroke-width="1.100" fill="none"/><path d="M5.500 5.500c-1-1.500 1-2 0-3.500M9 5.500c-1-1.500 1-2 0-3.500" stroke="#c98a5a" stroke-width="1.100" fill="none"/><path d="M3 7h10" stroke="#f0b08a" stroke-width="1.200"/><circle cx="4.500" cy="11.500" r="3.800" fill="#d8322b"/><path d="M3 10l3 3M6 10l-3 3" stroke="#fff" stroke-width="0.900"/></svg>
<span class="s" style="top:272.7px;font-size:11px;line-height:14px;color:#000;left:48.2px;">Estructuta</span>
<svg style="left:5.7px;top:290.5px" width="14" height="14" viewBox="0 0 14 14"><rect x="2.500" y="2.500" width="9" height="9" fill="#fff" stroke="#9ba5b7" stroke-width="1.100"/><path d="M4.500 7h5" stroke="#333" stroke-width="1.200"/></svg>
<svg style="left:23.7px;top:289.0px" width="17" height="17" viewBox="1.300 1.300 13.400 13.400"><path d="M2.500 7h10.500c0 5-2 7.500-5.250 7.500s-5.250-2.500-5.250-7.500z" fill="#cc4a32" stroke="#8f2f1c" stroke-width="0.800"/><path d="M13 8.500c2.500 0 2.500 3.500-0.700 3.500" stroke="#a33a22" stroke-width="1.100" fill="none"/><path d="M5.500 5.500c-1-1.500 1-2 0-3.500M9 5.500c-1-1.500 1-2 0-3.500" stroke="#c98a5a" stroke-width="1.100" fill="none"/><path d="M3 7h10" stroke="#f0b08a" stroke-width="1.200"/></svg>
<span class="s" style="top:290.7px;font-size:11px;line-height:14px;color:#000;left:48.2px;">Vector</span>
<svg style="left:24.9px;top:308.5px" width="14" height="14" viewBox="0 0 14 14"><rect x="2.500" y="2.500" width="9" height="9" fill="#fff" stroke="#9ba5b7" stroke-width="1.100"/><path d="M4.500 7h5" stroke="#333" stroke-width="1.200"/></svg>
<svg style="left:42.9px;top:307.0px" width="17" height="17" viewBox="1.300 1.300 13.400 13.400"><path d="M3 4.500h4.500l1.500 1.500h4.500v8.500h-10.500z" fill="#e9bb4e" stroke="#b98a26" stroke-width="0.900"/><path d="M3.500 7.500h9.500v6.500h-9.500z" fill="#f2d272"/></svg>
<span class="s" style="top:308.7px;font-size:11px;line-height:14px;color:#000;left:67.4px;">Source Packages</span>
<svg style="left:44.1px;top:326.4px" width="14" height="14" viewBox="0 0 14 14"><rect x="2.500" y="2.500" width="9" height="9" fill="#fff" stroke="#9ba5b7" stroke-width="1.100"/><path d="M4.500 7h5" stroke="#333" stroke-width="1.200"/></svg>
<svg style="left:62.1px;top:324.9px" width="17" height="17" viewBox="1.300 1.300 13.400 13.400"><rect x="3" y="3.500" width="10" height="10.500" fill="#e8b84a" stroke="#b3791f" stroke-width="0.900"/><path d="M3 7h10M8 3.500v10.500" stroke="#b3791f" stroke-width="0.900"/></svg>
<span class="s" style="top:326.6px;font-size:11px;line-height:14px;color:#000;left:86.7px;">vector</span>
<div style="left:70.3px;top:351.1px;width:8.0px;height:1.0px;background:#c3c8d2"></div>
<svg style="left:81.4px;top:343.1px" width="17" height="17" viewBox="1.300 1.300 13.400 13.400"><path d="M3.500 1.500h7l3 3v10h-10z" fill="#f3f3ee" stroke="#9a9a92" stroke-width="1"/><circle cx="9.500" cy="10" r="4" fill="#5aa83a"/><path d="M8 10a1.500 1.500 0 1 1 1.500 1.500" stroke="#e8f5e0" stroke-width="1.200" fill="none"/><path d="M4.500 6h5M4.500 8h3" stroke="#b5b5ad" stroke-width="0.800"/></svg>
<span class="s" style="top:344.8px;font-size:11px;line-height:14px;color:#000;left:105.9px;">Vector.java</span>
<div style="left:70.3px;top:369.1px;width:8.0px;height:1.0px;background:#c3c8d2"></div>
<svg style="left:81.4px;top:361.1px" width="17" height="17" viewBox="1.300 1.300 13.400 13.400"><path d="M3.500 1.500h7l3 3v10h-10z" fill="#f3f3ee" stroke="#9a9a92" stroke-width="1"/><circle cx="9.500" cy="10" r="4" fill="#5aa83a"/><path d="M8 10a1.500 1.500 0 1 1 1.500 1.500" stroke="#e8f5e0" stroke-width="1.200" fill="none"/><path d="M4.500 6h5M4.500 8h3" stroke="#b5b5ad" stroke-width="0.800"/></svg>
<div style="left:104.5px;top:360.9px;width:66.5px;height:17.5px;background:#e1e1e1;"></div>
<span class="s" style="top:362.8px;font-size:11px;line-height:14px;color:#000;left:105.9px;">vectora.java</span>
<svg style="left:24.9px;top:380.3px" width="14" height="14" viewBox="0 0 14 14"><rect x="2.500" y="2.500" width="9" height="9" fill="#fff" stroke="#9ba5b7" stroke-width="1.100"/><path d="M4.500 7h5M7 4.500v5" stroke="#333" stroke-width="1.200"/></svg>
<svg style="left:42.9px;top:378.8px" width="17" height="17" viewBox="1.300 1.300 13.400 13.400"><path d="M3 4.500h4.500l1.500 1.500h4.500v8.500h-10.500z" fill="#e9bb4e" stroke="#b98a26" stroke-width="0.900"/><path d="M3.500 7.500h9.500v6.500h-9.500z" fill="#f2d272"/></svg>
<span class="s" style="top:380.5px;font-size:11px;line-height:14px;color:#000;left:67.4px;">Test Packages</span>
<div style="left:395.9px;top:108.7px;width:15.8px;height:286.2px;background:#f0f0f0;"></div>
<div style="left:396.3px;top:126.4px;width:14.9px;height:217.4px;background:#cdcdcd;"></div>
<svg style="left:395.7px;top:109.1px" width="16" height="16" viewBox="0 0 16 16"><path d="M4 9.500l4-4l4 4" stroke="#555" stroke-width="1.500" fill="none"/></svg>
<svg style="left:395.7px;top:378.0px" width="16" height="16" viewBox="0 0 16 16"><path d="M4 6l4 4l4-4" stroke="#555" stroke-width="1.500" fill="none"/></svg>
<div style="left:1.7px;top:400.6px;width:410.9px;height:304.4px;background:#fff;border:1px solid #a5a5a5;box-sizing:border-box;"></div>
<div style="left:2.6px;top:401.5px;width:409.0px;height:18.9px;background:#efefef;border-bottom:1px solid #b4b4b4;"></div>
<div style="left:2.6px;top:401.5px;width:123.2px;height:20.0px;background:#fff;border-right:1px solid #c8c8c8;"></div>
<span class="s" style="top:404.7px;font-size:11px;line-height:14px;color:#000;left:7.7px;font-weight:bold;letter-spacing:-0.05px;">cargar - Navigator</span>
<svg style="left:111.5px;top:406.7px" width="10" height="10" viewBox="0 0 10 10"><path d="M1.500 1.500l7 7M8.500 1.500l-7 7" stroke="#333" stroke-width="1.300"/></svg>
<svg style="left:393.5px;top:406.0px" width="12" height="12" viewBox="0 0 12 12"><path d="M0.500 6h11" stroke="#333" stroke-width="2.200"/></svg>
<div style="left:2.6px;top:421.7px;width:409.0px;height:22.4px;background:#f0f0f0;"></div>
<div style="left:3.5px;top:422.6px;width:198.5px;height:20.4px;background:#e3e3e3;border:1px solid #c0c0c0;box-sizing:border-box;"></div>
<span class="s" style="top:425.6px;font-size:11px;line-height:14px;color:#000;left:7.7px;">Members</span>
<svg style="left:182.1px;top:424.8px" width="16" height="16" viewBox="0 0 16 16"><path d="M4.500 6.500l3.500 3.500l3.500-3.500" stroke="#666" stroke-width="1.200" fill="none"/></svg>
<div style="left:205.9px;top:422.6px;width:174.5px;height:20.4px;background:#ececec;border:1px solid #c6c6c6;box-sizing:border-box;"></div>
<span class="s" style="top:425.6px;font-size:11px;line-height:14px;color:#8c8c8c;left:210.7px;">&lt;empty&gt;</span>
<div style="left:362.0px;top:423.7px;width:17.4px;height:18.2px;background:#cfcfcf;"></div>
<svg style="left:362.7px;top:424.8px" width="16" height="16" viewBox="0 0 16 16"><path d="M4.500 6.500l3.500 3.500l3.500-3.500" stroke="#aaa" stroke-width="1.200" fill="none"/></svg>
<svg style="left:384.7px;top:425.0px" width="16" height="16" viewBox="0 0 16 16"><rect x="2.500" y="2.500" width="11" height="11" fill="#eaf2fb" stroke="#5b86b8" stroke-width="1"/><rect x="2.500" y="2.500" width="11" height="3" fill="#5b86b8"/><path d="M7 5.500v8" stroke="#5b86b8"/><rect x="8.500" y="8" width="3" height="4" fill="none" stroke="#5b86b8" stroke-width="0.800"/></svg>
<svg style="left:5.7px;top:445.1px" width="14" height="14" viewBox="0 0 14 14"><circle cx="7" cy="7" r="4.500" fill="#eef1f6" stroke="#c5ccd8" stroke-width="1"/></svg>
<svg style="left:23.7px;top:443.6px" width="17" height="17" viewBox="1.300 1.300 13.400 13.400"><path d="M2 9l6-5l6 5v5h-12z" fill="#f2d9a0" stroke="#c9913a" stroke-width="0.900"/><circle cx="8" cy="9.500" r="3.600" fill="#e98b3a" stroke="#b55f1c" stroke-width="0.700"/><rect x="1.500" y="10.500" width="5" height="4" fill="#7fb0dd"/></svg>
<span class="s" style="top:445.3px;font-size:11px;line-height:14px;color:#000;left:48.2px;letter-spacing:-0.22px;">vectora</span>
<div style="left:31.9px;top:470.2px;width:8.0px;height:1.0px;background:#c3c8d2"></div>
<svg style="left:46.4px;top:462.2px" width="17" height="17" viewBox="1.300 1.300 13.400 13.400"><circle cx="8" cy="8.500" r="4" fill="#ea8f8f" stroke="#cf6f6f" stroke-width="0.900"/><ellipse cx="7" cy="7.200" rx="1.700" ry="1.200" fill="#f7c4c4"/></svg>
<span class="s" style="top:464.0px;font-size:11px;line-height:14px;color:#000;left:67.4px;letter-spacing:-0.22px;">calcularPromedio()</span>
<div style="left:31.9px;top:488.7px;width:8.0px;height:1.0px;background:#c3c8d2"></div>
<svg style="left:46.4px;top:480.7px" width="17" height="17" viewBox="1.300 1.300 13.400 13.400"><circle cx="8" cy="8.500" r="4" fill="#ea8f8f" stroke="#cf6f6f" stroke-width="0.900"/><ellipse cx="7" cy="7.200" rx="1.700" ry="1.200" fill="#f7c4c4"/></svg>
<div style="left:66.1px;top:480.5px;width:41.6px;height:17.5px;background:#e1e1e1;"></div>
<span class="s" style="top:482.4px;font-size:11px;line-height:14px;color:#000;left:67.4px;letter-spacing:-0.22px;">cargar()</span>
<div style="left:31.9px;top:506.8px;width:8.0px;height:1.0px;background:#c3c8d2"></div>
<svg style="left:46.4px;top:498.8px" width="17" height="17" viewBox="1.300 1.300 13.400 13.400"><circle cx="8" cy="8.500" r="4" fill="#ea8f8f" stroke="#cf6f6f" stroke-width="0.900"/><ellipse cx="7" cy="7.200" rx="1.700" ry="1.200" fill="#f7c4c4"/></svg>
<span class="s" style="top:500.6px;font-size:11px;line-height:14px;color:#000;left:67.4px;letter-spacing:-0.22px;">main(<i style="color:#8c8c8c">String[]</i> ar)</span>
<div style="left:31.9px;top:525.0px;width:8.0px;height:1.0px;background:#c3c8d2"></div>
<svg style="left:46.4px;top:517.0px" width="17" height="17" viewBox="1.300 1.300 13.400 13.400"><circle cx="8" cy="8.500" r="4" fill="#ea8f8f" stroke="#cf6f6f" stroke-width="0.900"/><ellipse cx="7" cy="7.200" rx="1.700" ry="1.200" fill="#f7c4c4"/></svg>
<span class="s" style="top:518.8px;font-size:11px;line-height:14px;color:#000;left:67.4px;letter-spacing:-0.22px;">mayoresMenores()</span>
<div style="left:31.9px;top:542.6px;width:8.0px;height:1.0px;background:#c3c8d2"></div>
<svg style="left:46.4px;top:534.6px" width="17" height="17" viewBox="1.300 1.300 13.400 13.400"><rect x="4.500" y="4.500" width="8.500" height="8.500" fill="#cfe0f2" stroke="#4b79ae" stroke-width="1.100"/><circle cx="5" cy="5.500" r="3.200" fill="#d7a24a" stroke="#9a6a1c" stroke-width="0.700"/></svg>
<span class="s" style="top:536.3px;font-size:11px;line-height:14px;color:#000;left:67.4px;letter-spacing:-0.22px;">alturas<i style="color:#8c8c8c"> : float[]</i></span>
<div style="left:31.9px;top:560.3px;width:8.0px;height:1.0px;background:#c3c8d2"></div>
<svg style="left:46.4px;top:552.3px" width="17" height="17" viewBox="1.300 1.300 13.400 13.400"><rect x="4.500" y="4.500" width="8.500" height="8.500" fill="#cfe0f2" stroke="#4b79ae" stroke-width="1.100"/><circle cx="5" cy="5.500" r="3.200" fill="#d7a24a" stroke="#9a6a1c" stroke-width="0.700"/></svg>
<span class="s" style="top:554.0px;font-size:11px;line-height:14px;color:#000;left:67.4px;letter-spacing:-0.22px;">promedio<i style="color:#8c8c8c"> : float</i></span>
<div style="left:31.9px;top:578.1px;width:8.0px;height:1.0px;background:#c3c8d2"></div>
<svg style="left:46.4px;top:570.1px" width="17" height="17" viewBox="1.300 1.300 13.400 13.400"><rect x="4.500" y="4.500" width="8.500" height="8.500" fill="#cfe0f2" stroke="#4b79ae" stroke-width="1.100"/><circle cx="5" cy="5.500" r="3.200" fill="#d7a24a" stroke="#9a6a1c" stroke-width="0.700"/></svg>
<span class="s" style="top:571.8px;font-size:11px;line-height:14px;color:#000;left:67.4px;letter-spacing:-0.22px;">teclado<i style="color:#8c8c8c"> : Scanner</i></span>
<div style="left:2.6px;top:671.1px;width:409.0px;height:33.1px;background:#f0f0f0;border-top:1px solid #c9c9c9;"></div>
<div style="left:38.3px;top:675.9px;width:119.1px;height:26.6px;background:#c4ddf3;"></div>
<div style="left:194.9px;top:675.9px;width:28.1px;height:26.6px;background:#c4ddf3;"></div>
<svg style="left:15.0px;top:681.2px" width="16" height="16" viewBox="1.500 1.500 13 13"><path d="M2 9l6-5.500l6 5.500v5h-12z" fill="#e9a08a" stroke="#b35a4a" stroke-width="1"/><circle cx="8" cy="10" r="2.800" fill="#d9534f"/></svg>
<svg style="left:44.7px;top:681.2px" width="16" height="16" viewBox="1.500 1.500 13 13"><rect x="4" y="3.500" width="8" height="9" fill="#dbe9f7" stroke="#4b79ae" stroke-width="1.500"/></svg>
<svg style="left:74.0px;top:681.2px" width="16" height="16" viewBox="1.500 1.500 13 13"><path d="M8 3v10" stroke="#5b86b8" stroke-width="2"/></svg>
<svg style="left:104.6px;top:681.2px" width="16" height="16" viewBox="1.500 1.500 13 13"><path d="M3 7.500h10v6.500h-10z" fill="#d9a24a" stroke="#9a6a1c" stroke-width="0.900"/><path d="M5.500 7.500v-2a2.500 2.500 0 0 1 5 0v2" stroke="#9a6a1c" stroke-width="1.300" fill="none"/></svg>
<svg style="left:135.0px;top:681.2px" width="16" height="16" viewBox="1.500 1.500 13 13"><path d="M2.500 9l5.500-5l5.500 5v5h-11z" fill="#f0cf9a" stroke="#c9913a" stroke-width="1"/><circle cx="10.500" cy="11" r="2.800" fill="#e57373"/></svg>
<div style="left:160.8px;top:679.3px;width:1.0px;height:20.0px;background:#c3c3c3"></div>
<svg style="left:167.5px;top:681.2px" width="16" height="16" viewBox="1.500 1.500 13 13"><path d="M2.500 5h5l1.500 1.500h4.500v7.500h-11z" fill="#edc15c" stroke="#b98a26" stroke-width="0.900"/><path d="M9 9l4 2.500l-4 2.500z" fill="#c0504d"/></svg>
<div style="left:192.5px;top:679.3px;width:1.0px;height:20.0px;background:#c3c3c3"></div>
<svg style="left:200.6px;top:681.2px" width="16" height="16" viewBox="1.500 1.500 13 13"><path d="M5 2.500v11M3 11l2 2.500l2-2.500" stroke="#33577f" stroke-width="1.300" fill="none"/><rect x="8.500" y="3" width="4" height="4.500" fill="#5b86b8"/><rect x="8.500" y="9" width="4" height="4.500" fill="#c98a3a"/></svg>
<svg style="left:231.0px;top:681.2px" width="16" height="16" viewBox="1.500 1.500 13 13"><path d="M4.500 3v10M2.500 10.500l2 2.500l2-2.500" stroke="#444" stroke-width="1.300" fill="none"/><path d="M9 4h4l-4 4h4M9 13l2-4.500l2 4.500" stroke="#444" stroke-width="1.200" fill="none"/></svg>
<svg style="left:203.9px;top:668.8px" width="8" height="8" viewBox="0 0 8 8"><path d="M1.500 2.500h5l-2.500 3z" fill="#777"/></svg>
<div style="left:416.5px;top:87.6px;width:947.9px;height:427.0px;background:#fff;border:1px solid #a5a5a5;box-sizing:border-box;"></div>
<div style="left:417.4px;top:88.3px;width:946.1px;height:18.6px;background:#f0f0f0;border-bottom:1px solid #b4b4b4;"></div>
<div style="left:417.4px;top:88.3px;width:102.4px;height:19.7px;background:#fff;border-right:1px solid #b4b4b4;"></div>
<svg style="left:418.8px;top:90.1px" width="16" height="16" viewBox="0 0 16 16"><path d="M3.500 1.500h7l3 3v10h-10z" fill="#f3f3ee" stroke="#9a9a92" stroke-width="1"/><circle cx="9.500" cy="10" r="4" fill="#5aa83a"/><path d="M8 10a1.500 1.500 0 1 1 1.500 1.500" stroke="#e8f5e0" stroke-width="1.200" fill="none"/><path d="M4.500 6h5M4.500 8h3" stroke="#b5b5ad" stroke-width="0.800"/></svg>
<span class="s" style="top:90.6px;font-size:11.5px;line-height:15px;color:#000;left:438.6px;letter-spacing:0.1px;">vectora.java</span>
<svg style="left:507.7px;top:93.3px" width="10" height="10" viewBox="0 0 10 10"><path d="M1.500 1.500l7 7M8.500 1.500l-7 7" stroke="#333" stroke-width="1.300"/></svg>
<span class="s" style="top:85.8px;font-size:13px;line-height:17px;color:#c2c2c2;left:1302.0px;transform:translateX(-50%);">‹</span>
<span class="s" style="top:85.8px;font-size:13px;line-height:17px;color:#c2c2c2;left:1318.7px;transform:translateX(-50%);">›</span>
<svg style="left:1329.0px;top:86.5px" width="16" height="16" viewBox="0 0 16 16"><path d="M3 5.500h10l-5 5.500z" fill="#222"/></svg>
<svg style="left:1347.3px;top:86.5px" width="16" height="16" viewBox="0 0 16 16"><path d="M3.500 4.500h9v8h-9z" stroke="#222" stroke-width="1" fill="none"/><path d="M3.500 5h9" stroke="#222" stroke-width="2"/></svg>
<div style="left:417.4px;top:108.0px;width:946.1px;height:26.2px;background:#f0f0f0;border-bottom:1px solid #b8b8b8;"></div>
<div style="left:417.8px;top:109.1px;width:50.3px;height:23.5px;background:#cde4f7;border:1px solid #9ccbee;box-sizing:border-box;"></div>
<span class="s" style="top:114.1px;font-size:11px;line-height:14px;color:#000;left:442.8px;transform:translateX(-50%);">Source</span>
<span class="s" style="top:114.1px;font-size:11px;line-height:14px;color:#000;left:491.5px;transform:translateX(-50%);">History</span>
<div style="left:520.9px;top:111.1px;width:1.0px;height:20.0px;background:#a9a9a9"></div>
<svg style="left:527.6px;top:113.1px" width="16" height="16" viewBox="0.400 0.400 15.200 15.200"><rect x="2" y="2.500" width="12" height="11" fill="#efe6d6" stroke="#8f8a80" stroke-width="1"/><path d="M6 6h6v5h-6z" fill="#e9a24a"/><path d="M9 8.500l5-3v6z" fill="#d9763a"/></svg>
<svg style="left:550.4px;top:113.1px" width="16" height="16" viewBox="0.400 0.400 15.200 15.200"><rect x="3" y="3" width="10" height="10" fill="#b9b9b9" stroke="#a8a8a8" stroke-width="1"/></svg>
<svg style="left:571.1px;top:117.8px" width="8" height="8" viewBox="0 0 8 8"><path d="M1.500 3h5l-2.500 3z" fill="#333"/></svg>
<svg style="left:583.1px;top:113.1px" width="16" height="16" viewBox="0.400 0.400 15.200 15.200"><rect x="3" y="3" width="10" height="10" fill="#b9b9b9" stroke="#a8a8a8" stroke-width="1"/></svg>
<svg style="left:604.3px;top:117.8px" width="8" height="8" viewBox="0 0 8 8"><path d="M1.500 3h5l-2.500 3z" fill="#333"/></svg>
<div style="left:615.3px;top:111.1px;width:1.0px;height:20.0px;background:#a9a9a9"></div>
<svg style="left:622.0px;top:113.1px" width="16" height="16" viewBox="0.400 0.400 15.200 15.200"><rect x="1.500" y="1.500" width="10" height="8" fill="#f5e7b8" stroke="#b79a4a" stroke-width="0.900"/><circle cx="8" cy="8" r="3.600" fill="#dfeaf7" stroke="#2f4f7a" stroke-width="1.600"/><path d="M10.500 10.500l4 4" stroke="#2f4f7a" stroke-width="2.200"/></svg>
<svg style="left:646.0px;top:113.1px" width="16" height="16" viewBox="0.400 0.400 15.200 15.200"><rect x="2" y="2" width="11" height="6.500" fill="#f1c46c" stroke="#b98a2e" stroke-width="0.900"/><path d="M13 11h-9l3-3M4 11l3 3" stroke="#2f6fb5" stroke-width="2.300" fill="none"/></svg>
<svg style="left:668.9px;top:113.1px" width="16" height="16" viewBox="0.400 0.400 15.200 15.200"><rect x="2" y="2" width="11" height="6.500" fill="#f1c46c" stroke="#b98a2e" stroke-width="0.900"/><path d="M3 11h9l-3-3M12 11l-3 3" stroke="#2f6fb5" stroke-width="2.300" fill="none"/></svg>
<svg style="left:691.7px;top:113.1px" width="16" height="16" viewBox="0.400 0.400 15.200 15.200"><rect x="2" y="2" width="11" height="5.500" fill="#f1c46c" stroke="#b98a2e" stroke-width="0.900"/><rect x="2" y="8.500" width="12" height="5" fill="#c9b48a" stroke="#8f7a4a" stroke-width="0.900"/></svg>
<svg style="left:714.6px;top:113.1px" width="16" height="16" viewBox="0.400 0.400 15.200 15.200"><rect x="1.500" y="2.500" width="12" height="9" fill="#fff" stroke="#555" stroke-width="1.100"/><path d="M11 8v6M8 11l3 3l3-3" stroke="#222" stroke-width="1.400" fill="none"/></svg>
<div style="left:736.3px;top:111.1px;width:1.0px;height:20.0px;background:#a9a9a9"></div>
<svg style="left:743.2px;top:113.1px" width="16" height="16" viewBox="0.400 0.400 15.200 15.200"><path d="M3 7l5-4.500l5 4.500l-5 4.500z" fill="#f0b64a" stroke="#b57f1c" stroke-width="0.900"/><path d="M6 10l-2.500 4M8 8a2 2 0 1 0 0.100 0" stroke="#2f6fb5" stroke-width="1.500" fill="none"/></svg>
<svg style="left:767.2px;top:113.1px" width="16" height="16" viewBox="0.400 0.400 15.200 15.200"><path d="M8 2v6M5 5.500l3 3l3-3" stroke="#e08a2a" stroke-width="2" fill="none"/><path d="M3 11l5-2.500l6 3.500l-5 2.500z" fill="#f0b64a" stroke="#b57f1c" stroke-width="0.800"/></svg>
<svg style="left:790.1px;top:113.1px" width="16" height="16" viewBox="0.400 0.400 15.200 15.200"><path d="M2.500 4.500l4-2l4 2.500l-4 2z" fill="#a8c2dd" stroke="#5f84ad" stroke-width="0.800"/><path d="M6 10.500l4-2l4 2.500l-4 2.500z" fill="#bfcfdf" stroke="#6f8fb0" stroke-width="0.800"/><path d="M6 6.500v3" stroke="#6f8fb0"/></svg>
<div style="left:813.6px;top:111.1px;width:1.0px;height:20.0px;background:#a9a9a9"></div>
<svg style="left:820.0px;top:113.1px" width="16" height="16" viewBox="0.400 0.400 15.200 15.200"><rect x="2" y="4.500" width="12" height="9" fill="#dbe7f3" stroke="#3f6a9a" stroke-width="1.300"/><path d="M5 9h6M5 11h4" stroke="#3f6a9a" stroke-width="1.200"/><path d="M4 2.500h5" stroke="#3f6a9a" stroke-width="1.400"/></svg>
<svg style="left:842.9px;top:113.1px" width="16" height="16" viewBox="0.400 0.400 15.200 15.200"><rect x="2" y="4.500" width="12" height="9" fill="#dbe7f3" stroke="#3f6a9a" stroke-width="1.300"/><path d="M5 9h6M5 11h4" stroke="#3f6a9a" stroke-width="1.200"/><path d="M4 2.500h5" stroke="#3f6a9a" stroke-width="1.400"/></svg>
<div style="left:864.6px;top:111.1px;width:1.0px;height:20.0px;background:#a9a9a9"></div>
<svg style="left:871.2px;top:113.1px" width="16" height="16" viewBox="0.400 0.400 15.200 15.200"><circle cx="8" cy="8" r="4.400" fill="#e66a6a" stroke="#cf4f4f" stroke-width="0.800"/></svg>
<svg style="left:894.1px;top:113.1px" width="16" height="16" viewBox="0.400 0.400 15.200 15.200"><rect x="3.500" y="3.500" width="9" height="9" fill="#c2c2c2" stroke="#adadad" stroke-width="1"/></svg>
<div style="left:916.5px;top:111.1px;width:1.0px;height:20.0px;background:#a9a9a9"></div>
<svg style="left:923.1px;top:113.1px" width="16" height="16" viewBox="0.400 0.400 15.200 15.200"><rect x="2" y="5.500" width="12" height="8.500" fill="#5c9a4a" stroke="#2f5f2a" stroke-width="1"/><path d="M5 5.500v-3h4v3" stroke="#2f5f2a" stroke-width="1.200" fill="#a8d08a"/><path d="M5 10h6" stroke="#d7ecc8" stroke-width="1.500"/></svg>
<svg style="left:946.0px;top:113.1px" width="16" height="16" viewBox="0.400 0.400 15.200 15.200"><path d="M2.500 13h11v-7" stroke="#111" stroke-width="2.600" fill="none"/></svg>
<svg style="left:1345.0px;top:113.1px" width="16" height="16" viewBox="0 0 16 16"><path d="M3.500 3.500h9v9h-9z" stroke="#444" fill="#fff"/><path d="M3.500 8h9M8 8v4.500" stroke="#222" stroke-width="1.600"/></svg>
<div style="left:417.6px;top:134.7px;width:27.0px;height:379.1px;background:#e9e9e9;border-right:1px solid #c6c6c6;"></div>
<div style="left:473.2px;top:271.5px;width:860.4px;height:17.1px;background:#e9eff8;"></div>
<div style="left:1113.8px;top:134.7px;width:1.0px;height:379.1px;background:#f3b7b7"></div>
<div style="left:451.0px;top:202.9px;width:12.3px;height:10.4px;background:#fff;border:1.5px solid #7d7d7d;box-sizing:border-box;"></div>
<div style="left:454.2px;top:207.4px;width:6.2px;height:1.4px;background:#333"></div>
<div style="left:456.7px;top:213.4px;width:1.3px;height:122.0px;background:#868686"></div>
<div style="left:457.4px;top:334.8px;width:5.7px;height:1.3px;background:#868686"></div>
<div style="left:451.0px;top:365.6px;width:12.3px;height:10.4px;background:#fff;border:1.5px solid #7d7d7d;box-sizing:border-box;"></div>
<div style="left:454.2px;top:370.1px;width:6.2px;height:1.4px;background:#333"></div>
<div style="left:456.7px;top:376.0px;width:1.3px;height:140.1px;background:#868686"></div>
<div style="left:457.4px;top:515.4px;width:5.7px;height:1.3px;background:#868686"></div>
<span class="m" style="top:127.3px;font-size:14.6px;line-height:19px;color:#1c1c1c;right:923.9px;-webkit-text-stroke:0.3px #1c1c1c;transform:scaleX(0.83);transform-origin:100% 50%;">10</span>
<span class="m" style="top:128.5px;font-size:11.597px;line-height:15px;color:#1a1a1a;left:474.8px;letter-spacing:1.04px;">    <i style="color:#1515e2">private</i> Scanner <i style="color:#109a10">teclado</i>;</span>
<span class="m" style="top:145.3px;font-size:14.6px;line-height:19px;color:#1c1c1c;right:923.9px;-webkit-text-stroke:0.3px #1c1c1c;transform:scaleX(0.83);transform-origin:100% 50%;">11</span>
<span class="m" style="top:146.6px;font-size:11.597px;line-height:15px;color:#1a1a1a;left:474.8px;letter-spacing:1.04px;">    <i style="color:#1515e2">private float</i>[] <i style="color:#109a10">alturas</i>;</span>
<span class="m" style="top:163.4px;font-size:14.6px;line-height:19px;color:#1c1c1c;right:923.9px;-webkit-text-stroke:0.3px #1c1c1c;transform:scaleX(0.83);transform-origin:100% 50%;">12</span>
<span class="m" style="top:164.6px;font-size:11.597px;line-height:15px;color:#1a1a1a;left:474.8px;letter-spacing:1.04px;">    <i style="color:#1515e2">private float</i> <i style="color:#109a10">promedio</i>;</span>
<span class="m" style="top:181.5px;font-size:14.6px;line-height:19px;color:#1c1c1c;right:923.9px;-webkit-text-stroke:0.3px #1c1c1c;transform:scaleX(0.83);transform-origin:100% 50%;">13</span>
<span class="m" style="top:199.5px;font-size:14.6px;line-height:19px;color:#1c1c1c;right:923.9px;-webkit-text-stroke:0.3px #1c1c1c;transform:scaleX(0.83);transform-origin:100% 50%;">14</span>
<span class="m" style="top:200.8px;font-size:11.597px;line-height:15px;color:#1a1a1a;left:474.8px;letter-spacing:1.04px;">    <i style="color:#1515e2">public void</i> <b>cargar</b>() {</span>
<span class="m" style="top:217.6px;font-size:14.6px;line-height:19px;color:#1c1c1c;right:923.9px;-webkit-text-stroke:0.3px #1c1c1c;transform:scaleX(0.83);transform-origin:100% 50%;">15</span>
<span class="m" style="top:218.8px;font-size:11.597px;line-height:15px;color:#1a1a1a;left:474.8px;letter-spacing:1.04px;">        <i style="color:#109a10">teclado</i>=<i style="color:#1515e2">new</i> Scanner(System.<i style="color:#109a10">in</i>);</span>
<span class="m" style="top:235.7px;font-size:14.6px;line-height:19px;color:#1c1c1c;right:923.9px;-webkit-text-stroke:0.3px #1c1c1c;transform:scaleX(0.83);transform-origin:100% 50%;">16</span>
<span class="m" style="top:236.9px;font-size:11.597px;line-height:15px;color:#1a1a1a;left:474.8px;letter-spacing:1.04px;">        <i style="color:#109a10">alturas</i>=<i style="color:#1515e2">new float</i>[5];</span>
<span class="m" style="top:253.7px;font-size:14.6px;line-height:19px;color:#1c1c1c;right:923.9px;-webkit-text-stroke:0.3px #1c1c1c;transform:scaleX(0.83);transform-origin:100% 50%;">17</span>
<span class="m" style="top:255.0px;font-size:11.597px;line-height:15px;color:#1a1a1a;left:474.8px;letter-spacing:1.04px;">        <i style="color:#1515e2">for</i>(<i style="color:#1515e2">int</i> f=0;f&lt;5;f++) {</span>
<span class="m" style="top:271.8px;font-size:14.6px;line-height:19px;color:#1c1c1c;right:923.9px;-webkit-text-stroke:0.3px #1c1c1c;transform:scaleX(0.83);transform-origin:100% 50%;">18</span>
<span class="m" style="top:273.0px;font-size:11.597px;line-height:15px;color:#1a1a1a;left:474.8px;letter-spacing:1.04px;">            System.<i style="color:#109a10">out</i>.print(<i style="color:#d08314">&quot;Ingrese las alturas de las personas:&quot;</i>);</span>
<span class="m" style="top:289.9px;font-size:14.6px;line-height:19px;color:#1c1c1c;right:923.9px;-webkit-text-stroke:0.3px #1c1c1c;transform:scaleX(0.83);transform-origin:100% 50%;">19</span>
<span class="m" style="top:291.1px;font-size:11.597px;line-height:15px;color:#1a1a1a;left:474.8px;letter-spacing:1.04px;">            <i style="color:#109a10">alturas</i>[f]=<i style="color:#109a10">teclado</i>.nextFloat();</span>
<span class="m" style="top:307.9px;font-size:14.6px;line-height:19px;color:#1c1c1c;right:923.9px;-webkit-text-stroke:0.3px #1c1c1c;transform:scaleX(0.83);transform-origin:100% 50%;">20</span>
<span class="m" style="top:309.2px;font-size:11.597px;line-height:15px;color:#1a1a1a;left:474.8px;letter-spacing:1.04px;">        }</span>
<span class="m" style="top:326.0px;font-size:14.6px;line-height:19px;color:#1c1c1c;right:923.9px;-webkit-text-stroke:0.3px #1c1c1c;transform:scaleX(0.83);transform-origin:100% 50%;">21</span>
<span class="m" style="top:327.2px;font-size:11.597px;line-height:15px;color:#1a1a1a;left:474.8px;letter-spacing:1.04px;">    }</span>
<span class="m" style="top:344.1px;font-size:14.6px;line-height:19px;color:#1c1c1c;right:923.9px;-webkit-text-stroke:0.3px #1c1c1c;transform:scaleX(0.83);transform-origin:100% 50%;">22</span>
<span class="m" style="top:362.2px;font-size:14.6px;line-height:19px;color:#1c1c1c;right:923.9px;-webkit-text-stroke:0.3px #1c1c1c;transform:scaleX(0.83);transform-origin:100% 50%;">23</span>
<span class="m" style="top:363.4px;font-size:11.597px;line-height:15px;color:#1a1a1a;left:474.8px;letter-spacing:1.04px;">    <i style="color:#1515e2">public void</i> <b>calcularPromedio</b>() {</span>
<span class="m" style="top:380.2px;font-size:14.6px;line-height:19px;color:#1c1c1c;right:923.9px;-webkit-text-stroke:0.3px #1c1c1c;transform:scaleX(0.83);transform-origin:100% 50%;">24</span>
<span class="m" style="top:381.4px;font-size:11.597px;line-height:15px;color:#1a1a1a;left:474.8px;letter-spacing:1.04px;">        <i style="color:#1515e2">float</i> suma;</span>
<span class="m" style="top:398.3px;font-size:14.6px;line-height:19px;color:#1c1c1c;right:923.9px;-webkit-text-stroke:0.3px #1c1c1c;transform:scaleX(0.83);transform-origin:100% 50%;">25</span>
<span class="m" style="top:399.5px;font-size:11.597px;line-height:15px;color:#1a1a1a;left:474.8px;letter-spacing:1.04px;">        suma=0;</span>
<span class="m" style="top:416.4px;font-size:14.6px;line-height:19px;color:#1c1c1c;right:923.9px;-webkit-text-stroke:0.3px #1c1c1c;transform:scaleX(0.83);transform-origin:100% 50%;">26</span>
<span class="m" style="top:417.6px;font-size:11.597px;line-height:15px;color:#1a1a1a;left:474.8px;letter-spacing:1.04px;">        <i style="color:#1515e2">for</i>(<i style="color:#1515e2">int</i> f=0;f&lt;5;f++) {</span>
<span class="m" style="top:434.4px;font-size:14.6px;line-height:19px;color:#1c1c1c;right:923.9px;-webkit-text-stroke:0.3px #1c1c1c;transform:scaleX(0.83);transform-origin:100% 50%;">27</span>
<span class="m" style="top:435.7px;font-size:11.597px;line-height:15px;color:#1a1a1a;left:474.8px;letter-spacing:1.04px;">            suma=suma+<i style="color:#109a10">alturas</i>[f];</span>
<span class="m" style="top:452.5px;font-size:14.6px;line-height:19px;color:#1c1c1c;right:923.9px;-webkit-text-stroke:0.3px #1c1c1c;transform:scaleX(0.83);transform-origin:100% 50%;">28</span>
<span class="m" style="top:453.7px;font-size:11.597px;line-height:15px;color:#1a1a1a;left:474.8px;letter-spacing:1.04px;">        }</span>
<span class="m" style="top:470.6px;font-size:14.6px;line-height:19px;color:#1c1c1c;right:923.9px;-webkit-text-stroke:0.3px #1c1c1c;transform:scaleX(0.83);transform-origin:100% 50%;">29</span>
<span class="m" style="top:471.8px;font-size:11.597px;line-height:15px;color:#1a1a1a;left:474.8px;letter-spacing:1.04px;">        <i style="color:#109a10">promedio</i>=suma/5;</span>
<span class="m" style="top:488.6px;font-size:14.6px;line-height:19px;color:#1c1c1c;right:923.9px;-webkit-text-stroke:0.3px #1c1c1c;transform:scaleX(0.83);transform-origin:100% 50%;">30</span>
<span class="m" style="top:489.9px;font-size:11.597px;line-height:15px;color:#1a1a1a;left:474.8px;letter-spacing:1.04px;">        System.<i style="color:#109a10">out</i>.println(<i style="color:#d08314">&quot;Promedio de alturas:&quot;</i>+<i style="color:#109a10">promedio</i>);</span>
<span class="m" style="top:506.7px;font-size:14.6px;line-height:19px;color:#1c1c1c;right:923.9px;-webkit-text-stroke:0.3px #1c1c1c;transform:scaleX(0.83);transform-origin:100% 50%;">31</span>
<span class="m" style="top:507.9px;font-size:11.597px;line-height:15px;color:#1a1a1a;left:474.8px;letter-spacing:1.04px;">    }</span>
<div style="left:417.4px;top:108.0px;width:946.1px;height:26.2px;background:#f0f0f0;border-bottom:1px solid #b8b8b8;"></div>
<div style="left:417.8px;top:109.1px;width:50.3px;height:23.5px;background:#cde4f7;border:1px solid #9ccbee;box-sizing:border-box;"></div>
<span class="s" style="top:114.1px;font-size:11px;line-height:14px;color:#000;left:442.8px;transform:translateX(-50%);">Source</span>
<span class="s" style="top:114.1px;font-size:11px;line-height:14px;color:#000;left:491.5px;transform:translateX(-50%);">History</span>
<div style="left:520.9px;top:111.1px;width:1.0px;height:20.0px;background:#a9a9a9"></div>
<svg style="left:527.6px;top:113.1px" width="16" height="16" viewBox="0.400 0.400 15.200 15.200"><rect x="2" y="2.500" width="12" height="11" fill="#efe6d6" stroke="#8f8a80" stroke-width="1"/><path d="M6 6h6v5h-6z" fill="#e9a24a"/><path d="M9 8.500l5-3v6z" fill="#d9763a"/></svg>
<svg style="left:550.4px;top:113.1px" width="16" height="16" viewBox="0.400 0.400 15.200 15.200"><rect x="3" y="3" width="10" height="10" fill="#b9b9b9" stroke="#a8a8a8" stroke-width="1"/></svg>
<svg style="left:571.1px;top:117.8px" width="8" height="8" viewBox="0 0 8 8"><path d="M1.500 3h5l-2.500 3z" fill="#333"/></svg>
<svg style="left:583.1px;top:113.1px" width="16" height="16" viewBox="0.400 0.400 15.200 15.200"><rect x="3" y="3" width="10" height="10" fill="#b9b9b9" stroke="#a8a8a8" stroke-width="1"/></svg>
<svg style="left:604.3px;top:117.8px" width="8" height="8" viewBox="0 0 8 8"><path d="M1.500 3h5l-2.500 3z" fill="#333"/></svg>
<div style="left:615.3px;top:111.1px;width:1.0px;height:20.0px;background:#a9a9a9"></div>
<svg style="left:622.0px;top:113.1px" width="16" height="16" viewBox="0.400 0.400 15.200 15.200"><rect x="1.500" y="1.500" width="10" height="8" fill="#f5e7b8" stroke="#b79a4a" stroke-width="0.900"/><circle cx="8" cy="8" r="3.600" fill="#dfeaf7" stroke="#2f4f7a" stroke-width="1.600"/><path d="M10.500 10.500l4 4" stroke="#2f4f7a" stroke-width="2.200"/></svg>
<svg style="left:646.0px;top:113.1px" width="16" height="16" viewBox="0.400 0.400 15.200 15.200"><rect x="2" y="2" width="11" height="6.500" fill="#f1c46c" stroke="#b98a2e" stroke-width="0.900"/><path d="M13 11h-9l3-3M4 11l3 3" stroke="#2f6fb5" stroke-width="2.300" fill="none"/></svg>
<svg style="left:668.9px;top:113.1px" width="16" height="16" viewBox="0.400 0.400 15.200 15.200"><rect x="2" y="2" width="11" height="6.500" fill="#f1c46c" stroke="#b98a2e" stroke-width="0.900"/><path d="M3 11h9l-3-3M12 11l-3 3" stroke="#2f6fb5" stroke-width="2.300" fill="none"/></svg>
<svg style="left:691.7px;top:113.1px" width="16" height="16" viewBox="0.400 0.400 15.200 15.200"><rect x="2" y="2" width="11" height="5.500" fill="#f1c46c" stroke="#b98a2e" stroke-width="0.900"/><rect x="2" y="8.500" width="12" height="5" fill="#c9b48a" stroke="#8f7a4a" stroke-width="0.900"/></svg>
<svg style="left:714.6px;top:113.1px" width="16" height="16" viewBox="0.400 0.400 15.200 15.200"><rect x="1.500" y="2.500" width="12" height="9" fill="#fff" stroke="#555" stroke-width="1.100"/><path d="M11 8v6M8 11l3 3l3-3" stroke="#222" stroke-width="1.400" fill="none"/></svg>
<div style="left:736.3px;top:111.1px;width:1.0px;height:20.0px;background:#a9a9a9"></div>
<svg style="left:743.2px;top:113.1px" width="16" height="16" viewBox="0.400 0.400 15.200 15.200"><path d="M3 7l5-4.500l5 4.500l-5 4.500z" fill="#f0b64a" stroke="#b57f1c" stroke-width="0.900"/><path d="M6 10l-2.500 4M8 8a2 2 0 1 0 0.100 0" stroke="#2f6fb5" stroke-width="1.500" fill="none"/></svg>
<svg style="left:767.2px;top:113.1px" width="16" height="16" viewBox="0.400 0.400 15.200 15.200"><path d="M8 2v6M5 5.500l3 3l3-3" stroke="#e08a2a" stroke-width="2" fill="none"/><path d="M3 11l5-2.500l6 3.500l-5 2.500z" fill="#f0b64a" stroke="#b57f1c" stroke-width="0.800"/></svg>
<svg style="left:790.1px;top:113.1px" width="16" height="16" viewBox="0.400 0.400 15.200 15.200"><path d="M2.500 4.500l4-2l4 2.500l-4 2z" fill="#a8c2dd" stroke="#5f84ad" stroke-width="0.800"/><path d="M6 10.500l4-2l4 2.500l-4 2.500z" fill="#bfcfdf" stroke="#6f8fb0" stroke-width="0.800"/><path d="M6 6.500v3" stroke="#6f8fb0"/></svg>
<div style="left:813.6px;top:111.1px;width:1.0px;height:20.0px;background:#a9a9a9"></div>
<svg style="left:820.0px;top:113.1px" width="16" height="16" viewBox="0.400 0.400 15.200 15.200"><rect x="2" y="4.500" width="12" height="9" fill="#dbe7f3" stroke="#3f6a9a" stroke-width="1.300"/><path d="M5 9h6M5 11h4" stroke="#3f6a9a" stroke-width="1.200"/><path d="M4 2.500h5" stroke="#3f6a9a" stroke-width="1.400"/></svg>
<svg style="left:842.9px;top:113.1px" width="16" height="16" viewBox="0.400 0.400 15.200 15.200"><rect x="2" y="4.500" width="12" height="9" fill="#dbe7f3" stroke="#3f6a9a" stroke-width="1.300"/><path d="M5 9h6M5 11h4" stroke="#3f6a9a" stroke-width="1.200"/><path d="M4 2.500h5" stroke="#3f6a9a" stroke-width="1.400"/></svg>
<div style="left:864.6px;top:111.1px;width:1.0px;height:20.0px;background:#a9a9a9"></div>
<svg style="left:871.2px;top:113.1px" width="16" height="16" viewBox="0.400 0.400 15.200 15.200"><circle cx="8" cy="8" r="4.400" fill="#e66a6a" stroke="#cf4f4f" stroke-width="0.800"/></svg>
<svg style="left:894.1px;top:113.1px" width="16" height="16" viewBox="0.400 0.400 15.200 15.200"><rect x="3.500" y="3.500" width="9" height="9" fill="#c2c2c2" stroke="#adadad" stroke-width="1"/></svg>
<div style="left:916.5px;top:111.1px;width:1.0px;height:20.0px;background:#a9a9a9"></div>
<svg style="left:923.1px;top:113.1px" width="16" height="16" viewBox="0.400 0.400 15.200 15.200"><rect x="2" y="5.500" width="12" height="8.500" fill="#5c9a4a" stroke="#2f5f2a" stroke-width="1"/><path d="M5 5.500v-3h4v3" stroke="#2f5f2a" stroke-width="1.200" fill="#a8d08a"/><path d="M5 10h6" stroke="#d7ecc8" stroke-width="1.500"/></svg>
<svg style="left:946.0px;top:113.1px" width="16" height="16" viewBox="0.400 0.400 15.200 15.200"><path d="M2.500 13h11v-7" stroke="#111" stroke-width="2.600" fill="none"/></svg>
<svg style="left:1345.0px;top:113.1px" width="16" height="16" viewBox="0 0 16 16"><path d="M3.500 3.500h9v9h-9z" stroke="#444" fill="#fff"/><path d="M3.500 8h9M8 8v4.500" stroke="#222" stroke-width="1.600"/></svg>
<div style="left:1333.5px;top:134.7px;width:14.9px;height:379.1px;background:#f0f0f0;"></div>
<div style="left:1334.0px;top:201.6px;width:13.9px;height:110.9px;background:#cdcdcd;"></div>
<svg style="left:1332.4px;top:135.8px" width="16" height="16" viewBox="0 0 16 16"><path d="M4 9.500l4-4l4 4" stroke="#555" stroke-width="1.500" fill="none"/></svg>
<svg style="left:1332.4px;top:497.3px" width="16" height="16" viewBox="0 0 16 16"><path d="M4 6l4 4l4-4" stroke="#555" stroke-width="1.500" fill="none"/></svg>
<div style="left:1348.4px;top:134.7px;width:15.1px;height:379.1px;background:#f0f0f0;"></div>
<div style="left:1352.1px;top:142.0px;width:6.9px;height:6.7px;background:#4caf50;"></div>
<div style="left:1350.7px;top:417.9px;width:11.9px;height:2.4px;background:#b5b36a;"></div>
<div style="left:1353.4px;top:246.7px;width:5.0px;height:2.2px;background:#666;"></div>
<div style="left:416.5px;top:514.2px;width:947.9px;height:6.7px;background:#d9d9d9;"></div>
<div style="left:416.5px;top:520.0px;width:947.9px;height:185.0px;background:#fff;border:1px solid #a5a5a5;box-sizing:border-box;"></div>
<div style="left:417.4px;top:520.9px;width:946.1px;height:18.4px;background:#f0f0f0;border-bottom:1px solid #b4b4b4;"></div>
<div style="left:417.4px;top:520.9px;width:155.5px;height:19.3px;background:#dde9f6;border:1px solid #a9c3df;box-sizing:border-box;"></div>
<span class="s" style="top:523.2px;font-size:11px;line-height:14px;color:#000;left:420.8px;font-weight:bold;letter-spacing:0.3px;">Output - Vector (run) #3</span>
<svg style="left:558.3px;top:525.2px" width="10" height="10" viewBox="0 0 10 10"><path d="M1.500 1.500l7 7M8.500 1.500l-7 7" stroke="#333" stroke-width="1.300"/></svg>
<svg style="left:1348.3px;top:523.7px" width="12" height="12" viewBox="0 0 12 12"><path d="M0.500 6h11" stroke="#333" stroke-width="2.200"/></svg>
<div style="left:417.6px;top:540.2px;width:24.2px;height:163.9px;background:#f0f0f0;border-right:1px solid #d9d9d9;"></div>
<svg style="left:418.8px;top:543.5px" width="16" height="16" viewBox="0 0 16 16"><path d="M1 1l7.500 7l-7.500 7z" fill="#66c13a" stroke="#3f8c1f" stroke-width="0.700"/><path d="M8 1l7.500 7l-7.500 7z" fill="#66c13a" stroke="#3f8c1f" stroke-width="0.700"/></svg>
<svg style="left:418.8px;top:566.6px" width="16" height="16" viewBox="0 0 16 16"><path d="M1 1l7.500 7l-7.500 7z" fill="#d3d43a" stroke="#9a9c1c" stroke-width="0.700"/><path d="M8 1l7.500 7l-7.500 7z" fill="#d3d43a" stroke="#9a9c1c" stroke-width="0.700"/></svg>
<svg style="left:418.8px;top:589.6px" width="16" height="16" viewBox="0 0 16 16"><rect x="2.500" y="2.500" width="11" height="11" fill="#c9a7a7" stroke="#b48f8f"/></svg>
<svg style="left:418.8px;top:612.7px" width="16" height="16" viewBox="0 0 16 16"><circle cx="5.500" cy="5.500" r="4" fill="#b4c0ce" stroke="#6f7f92" stroke-width="1.400"/><circle cx="10.500" cy="10.500" r="4" fill="#9aabbd" stroke="#5f6f82" stroke-width="1.400"/><path d="M1 14l5-3" stroke="#c9a03a" stroke-width="2"/><circle cx="5.500" cy="5.500" r="1.300" fill="#f0f0f0"/><circle cx="10.500" cy="10.500" r="1.300" fill="#f0f0f0"/></svg>
<span class="m" style="top:544.1px;font-size:10.136px;line-height:13px;color:#111;left:459.0px;letter-spacing:0.909px;-webkit-text-stroke:0.2px #111;">Ingrese las alturas de las personas:34</span>
<span class="m" style="top:560.1px;font-size:10.136px;line-height:13px;color:#111;left:459.0px;letter-spacing:0.909px;-webkit-text-stroke:0.2px #111;">Ingrese las alturas de las personas:657</span>
<span class="m" style="top:576.0px;font-size:10.136px;line-height:13px;color:#111;left:459.0px;letter-spacing:0.909px;-webkit-text-stroke:0.2px #111;">Ingrese las alturas de las personas:345</span>
<span class="m" style="top:592.0px;font-size:10.136px;line-height:13px;color:#111;left:459.0px;letter-spacing:0.909px;-webkit-text-stroke:0.2px #111;">Ingrese las alturas de las personas:754</span>
<span class="m" style="top:608.0px;font-size:10.136px;line-height:13px;color:#111;left:459.0px;letter-spacing:0.909px;-webkit-text-stroke:0.2px #111;">Ingrese las alturas de las personas:567</span>
<span class="m" style="top:624.0px;font-size:10.136px;line-height:13px;color:#111;left:459.0px;letter-spacing:0.909px;-webkit-text-stroke:0.2px #111;">Promedio de alturas:472.0</span>
<span class="m" style="top:639.9px;font-size:10.136px;line-height:13px;color:#111;left:459.0px;letter-spacing:0.909px;-webkit-text-stroke:0.2px #111;">Cantidad de personas mayores al promedio:4</span>
<span class="m" style="top:655.9px;font-size:10.136px;line-height:13px;color:#111;left:459.0px;letter-spacing:0.909px;-webkit-text-stroke:0.2px #111;">Cantidad de personas menores al promedio:1</span>
<span class="m" style="top:671.9px;font-size:10.136px;line-height:13px;color:#1fa01f;left:459.0px;letter-spacing:0.909px;">BUILD SUCCESSFUL (total time: 23 seconds)</span>
<div style="left:1346.6px;top:540.2px;width:16.9px;height:163.9px;background:#f0f0f0;"></div>
<div style="left:1347.0px;top:571.2px;width:16.0px;height:115.4px;background:#cdcdcd;"></div>
<svg style="left:1346.8px;top:541.3px" width="16" height="16" viewBox="0 0 16 16"><path d="M4 9.500l4-4l4 4" stroke="#555" stroke-width="1.500" fill="none"/></svg>
<svg style="left:1346.8px;top:687.7px" width="16" height="16" viewBox="0 0 16 16"><path d="M4 6l4 4l4-4" stroke="#555" stroke-width="1.500" fill="none"/></svg>
<div style="left:0.0px;top:705.0px;width:1366.0px;height:24.4px;background:#f0f0f0;"></div>
<div style="left:417.6px;top:703.7px;width:946.3px;height:2.0px;background:#a5a5a5;"></div>
<div style="left:0.0px;top:706.8px;width:165.9px;height:22.6px;background:#f0f0f0;border-right:1px solid #c4c4c4;border-top:1px solid #d8d8d8;"></div>
<span class="s" style="top:711.3px;font-size:11px;line-height:14px;color:#000;left:3.1px;letter-spacing:-0.15px;">Finished building Vector (run) #3.</span>
<span class="s" style="top:710.6px;font-size:11px;line-height:14px;color:#000;right:374.3px;">Vector (run)</span>
<div style="left:995.1px;top:709.4px;width:199.4px;height:16.9px;background:#e6e6e6;border:1px solid #bcbcbc;box-sizing:border-box;"></div>
<div style="left:995.1px;top:709.4px;width:3.4px;height:16.9px;background:#3f7fd0;"></div>
<span class="s" style="top:710.6px;font-size:11px;line-height:14px;color:#2a6fd0;left:1093.5px;transform:translateX(-50%);">running...</span>
<svg style="left:1197.5px;top:709.6px" width="16" height="16" viewBox="0 0 16 16"><rect x="3" y="3" width="10" height="10" fill="#8a8a8a" stroke="#666"/><path d="M3 6h10M3 9h10" stroke="#ddd" stroke-width="0.800"/></svg>
<div style="left:1229.0px;top:709.2px;width:1.0px;height:17.7px;background:#c8c8c8"></div>
<span class="s" style="top:710.6px;font-size:11px;line-height:14px;color:#000;left:1284.4px;transform:translateX(-50%);">18:56</span>
<div style="left:1334.2px;top:709.2px;width:1.0px;height:17.7px;background:#c8c8c8"></div>
<span class="s" style="top:710.6px;font-size:11px;line-height:14px;color:#000;left:1351.8px;transform:translateX(-50%);">INS</span>
<div style="left:0.0px;top:729.4px;width:1366.0px;height:38.6px;background:#0b2e4d;"></div>
<div style="left:294.4px;top:729.4px;width:47.1px;height:38.6px;background:#8a5a3c;"></div>
<div style="left:341.5px;top:729.4px;width:48.9px;height:38.6px;background:#1e5486;"></div>
<div style="left:392.7px;top:729.4px;width:45.7px;height:38.6px;background:#123f69;"></div>
<div style="left:441.8px;top:729.4px;width:46.9px;height:38.6px;background:#0f3860;"></div>
<div style="left:341.5px;top:766.0px;width:48.9px;height:2.0px;background:#8cbce6;"></div>
<div style="left:393.8px;top:766.0px;width:43.4px;height:2.0px;background:#8cbce6;"></div>
<div style="left:443.0px;top:766.0px;width:44.6px;height:2.0px;background:#8cbce6;"></div>
<svg style="left:13.4px;top:739.1px" width="20" height="20" viewBox="0 0 16 16"><path d="M1 3.200l6-0.900v5.200h-6zM8 2.200l7-1v6.300h-7zM1 8.500h6v5.200l-6-0.900zM8 8.500h7v6.300l-7-1z" fill="#fff"/></svg>
<svg style="left:62.6px;top:739.1px" width="20" height="20" viewBox="0 0 16 16"><circle cx="9.500" cy="6.500" r="4" fill="none" stroke="#fff" stroke-width="1.500"/><path d="M6.800 9.500l-4.300 4.500" stroke="#fff" stroke-width="1.700"/></svg>
<svg style="left:111.3px;top:739.1px" width="20" height="20" viewBox="0 0 16 16"><circle cx="8" cy="8" r="5.300" fill="none" stroke="#fff" stroke-width="2.100"/></svg>
<svg style="left:159.8px;top:739.1px" width="20" height="20" viewBox="0 0 16 16"><rect x="4.500" y="3.500" width="7" height="9" fill="none" stroke="#fff" stroke-width="1.500"/><path d="M1.800 4.500v7M14.200 4.500v7M11.500 8h2.500M2 8h2.500" stroke="#fff" stroke-width="1.500"/></svg>
<svg style="left:207.4px;top:737.6px" width="23" height="23" viewBox="0 0 16 16"><path d="M1 3h5l1.500 1.500h7.500v9.500h-14z" fill="#f5c84a"/><rect x="1" y="7" width="14" height="7" fill="#f9dc7a"/><rect x="4" y="10" width="8" height="4" fill="#4a9de0"/></svg>
<svg style="left:255.7px;top:737.6px" width="23" height="23" viewBox="0 0 16 16"><circle cx="8" cy="8" r="7.300" fill="#1ed760"/><path d="M4 6c3-1 6-0.700 8.500 0.600M4.500 8.500c2.500-0.800 5-0.500 7 0.600M5 10.800c2-0.600 4-0.400 5.500 0.500" stroke="#0b2e4d" stroke-width="1.300" fill="none" stroke-linecap="round"/></svg>
<svg style="left:305.7px;top:737.6px" width="23" height="23" viewBox="0 0 16 16"><circle cx="11" cy="4" r="2.500" fill="#7b83eb"/><rect x="7" y="6" width="8" height="7.500" rx="1.500" fill="#5b63c9"/><rect x="1.500" y="4" width="9" height="9" rx="1" fill="#4b53bc"/><path d="M4 6.500h4M6 6.500v4.500" stroke="#fff" stroke-width="1.300"/><circle cx="12.500" cy="12" r="3.300" fill="#d9262c"/></svg>
<svg style="left:354.4px;top:737.6px" width="23" height="23" viewBox="0 0 16 16"><path d="M8 1l6 2.800v8.200l-6 3.200l-6-3.200v-8.200z" fill="#dfe9f5"/><path d="M8 1l6 2.800l-6 3l-6-3z" fill="#f7fafd"/><path d="M8 6.800v8.400l-6-3.200v-8.200z" fill="#8fb0d3"/></svg>
<svg style="left:403.6px;top:737.6px" width="23" height="23" viewBox="0 0 16 16"><path d="M2 2.500h9.500v10h-9.500z" fill="#2b7fd0"/><path d="M3.500 1.500h9v9.500h-9z" fill="#5fb0ea"/><path d="M4.500 7.500a3.500 3.500 0 0 0 6.500 1.500c-2.500 1-5-0.500-4-3z" fill="#3fc87a"/><circle cx="11.300" cy="11.300" r="4.200" fill="#e0262c"/><path d="M9.300 10.300h1.600v2.400M12 10h1.800v2.800h-1.800z" stroke="#fff" stroke-width="0.600" fill="none"/></svg>
<svg style="left:453.0px;top:737.6px" width="23" height="23" viewBox="0 0 16 16"><rect x="5" y="2" width="10" height="12" fill="#5fa0e8"/><rect x="5" y="8" width="10" height="6" fill="#2f6fc4"/><rect x="1" y="4" width="9" height="8.500" fill="#1f5fbf"/><path d="M3 6l1.200 4.500l1.300-4l1.300 4l1.200-4.500" stroke="#fff" stroke-width="1" fill="none"/></svg>
<svg style="left:1123.9px;top:739.1px" width="20" height="20" viewBox="0 0 16 16"><path d="M3.500 10l4.500-4.500l4.500 4.500" stroke="#fff" stroke-width="1.400" fill="none"/></svg>
<svg style="left:1148.4px;top:739.1px" width="20" height="20" viewBox="0 0 16 16"><rect x="5.500" y="1.500" width="5" height="8" rx="1" fill="#fff"/><rect x="4.500" y="9" width="7" height="4.500" fill="#e8e8e8"/></svg>
<svg style="left:1173.3px;top:739.1px" width="20" height="20" viewBox="0 0 16 16"><rect x="2" y="5" width="11.500" height="6.500" fill="#fff"/><rect x="13.500" y="7" width="1.500" height="2.500" fill="#fff"/></svg>
<svg style="left:1198.9px;top:739.1px" width="20" height="20" viewBox="0 0 16 16"><path d="M3 12.500a9 9 0 0 1 9-9M6 12.500a6 6 0 0 1 6-6M9 12.500a3 3 0 0 1 3-3" stroke="#9fb0c2" stroke-width="1.300" fill="none"/></svg>
<svg style="left:1221.3px;top:739.1px" width="20" height="20" viewBox="0 0 16 16"><path d="M2 6h3l3.500-3v10l-3.500-3h-3z" fill="#fff"/><path d="M10.500 5.500a4 4 0 0 1 0 5M12.500 3.500a7 7 0 0 1 0 9" stroke="#fff" stroke-width="1.100" fill="none"/></svg>
<span class="s" style="top:730.5px;font-size:12.3px;line-height:16px;color:#fff;left:1277.1px;transform:translateX(-50%);letter-spacing:-0.2px;">03:54 p. m.</span>
<span class="s" style="top:747.4px;font-size:12.3px;line-height:16px;color:#fff;left:1277.1px;transform:translateX(-50%);letter-spacing:-0.2px;">30/09/2020</span>
<svg style="left:1323.3px;top:739.1px" width="20" height="20" viewBox="0 0 16 16"><path d="M2 2.500h12v9h-7l-2.500 2.500v-2.500h-2.500z" stroke="#fff" stroke-width="1.300" fill="none"/></svg>
</div></div>
</body></html>
